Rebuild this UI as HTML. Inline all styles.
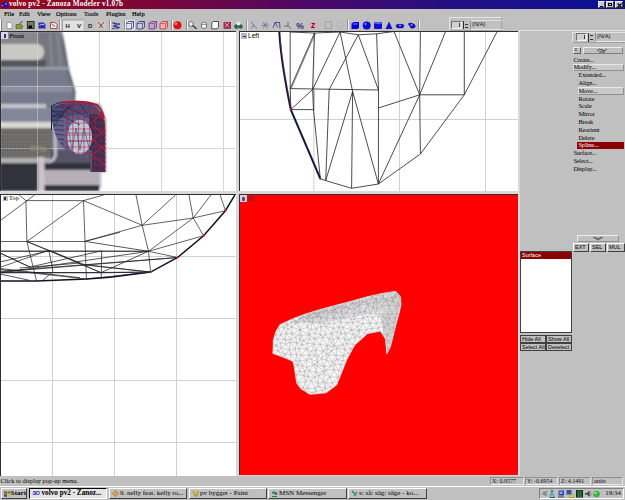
<!DOCTYPE html><html><head><meta charset="utf-8"><style>
*{margin:0;padding:0;box-sizing:border-box}
html,body{width:625px;height:500px;overflow:hidden;background:#c0c0c0;font-family:"Liberation Sans",sans-serif;}
.a{position:absolute}
.t{position:absolute;white-space:nowrap;line-height:1;color:#000}
.btn{position:absolute;background:#c0c0c0;border-top:1px solid #fff;border-left:1px solid #fff;border-right:1px solid #404040;border-bottom:1px solid #404040}
.sunk{position:absolute;border-top:1px solid #808080;border-left:1px solid #808080;border-right:1px solid #fff;border-bottom:1px solid #fff}
</style></head><body>

<div class="a" style="left:0;top:0;width:625px;height:9px;background:linear-gradient(to right,#980818 0%,#7a0638 25%,#4a0868 50%,#221082 72%,#0a1096 100%)"></div>
<svg class="a" style="left:1px;top:1.5px" width="8" height="6"><ellipse cx="4" cy="3" rx="3.8" ry="2.8" fill="#2010a8"/><circle cx="5" cy="2" r="1" fill="#a070e0"/><circle cx="1.5" cy="3.5" r="0.8" fill="#c080d0"/></svg>
<div class="t" style="left:9px;top:1px;font-size:7.2px;font-weight:bold;color:#fff;font-family:'Liberation Serif',serif;letter-spacing:0.2px">volvo pv2 - Zanoza Modeler v1.07b</div>
<div class="a" style="left:598px;top:1px;width:7px;height:7px;background:#c8c8c8;border-top:1px solid #f0f0f0;border-left:1px solid #f0f0f0;border-right:1px solid #404040;border-bottom:1px solid #404040"></div>
<div class="a" style="left:605.5px;top:1px;width:8px;height:7px;background:#c8c8c8;border-top:1px solid #f0f0f0;border-left:1px solid #f0f0f0;border-right:1px solid #404040;border-bottom:1px solid #404040"></div>
<div class="a" style="left:615.3px;top:1px;width:8px;height:7px;background:#c8c8c8;border-top:1px solid #f0f0f0;border-left:1px solid #f0f0f0;border-right:1px solid #404040;border-bottom:1px solid #404040"></div>
<div class="a" style="left:600px;top:5.5px;width:3px;height:1px;background:#000"></div>
<div class="a" style="left:608px;top:3px;width:4px;height:3px;border:1px solid #000;border-top-width:1.5px"></div>
<svg class="a" style="left:617px;top:2.5px" width="5" height="5"><path d="M0.5,0.5 L4.5,4.5 M4.5,0.5 L0.5,4.5" stroke="#000" stroke-width="1.1"/></svg>
<div class="t" style="left:4px;top:11px;font-size:6.5px;font-family:'Liberation Serif',serif;-webkit-text-stroke:0.15px #000">File</div>
<div class="t" style="left:19px;top:11px;font-size:6.5px;font-family:'Liberation Serif',serif;-webkit-text-stroke:0.15px #000">Edit</div>
<div class="t" style="left:37px;top:11px;font-size:6.5px;font-family:'Liberation Serif',serif;-webkit-text-stroke:0.15px #000">View</div>
<div class="t" style="left:56px;top:11px;font-size:6.5px;font-family:'Liberation Serif',serif;-webkit-text-stroke:0.15px #000">Options</div>
<div class="t" style="left:84px;top:11px;font-size:6.5px;font-family:'Liberation Serif',serif;-webkit-text-stroke:0.15px #000">Tools</div>
<div class="t" style="left:106px;top:11px;font-size:6.5px;font-family:'Liberation Serif',serif;-webkit-text-stroke:0.15px #000">Plugins</div>
<div class="t" style="left:132px;top:11px;font-size:6.5px;font-family:'Liberation Serif',serif;-webkit-text-stroke:0.15px #000">Help</div>
<div class="a" style="left:0;top:19px;width:2px;height:12px;background:#fff;border-right:1px solid #808080"></div>
<svg class="a" style="left:0;top:0" width="625" height="32" viewBox="0 0 625 32"><rect x="62.5" y="20" width="21" height="10.5" fill="#e2e2e2"/><path d="M62.5,30.5 L62.5,20 L83.5,20" fill="none" stroke="#808080" stroke-width="0.6"/><rect x="125" y="20" width="10" height="10.5" fill="#e0e0e0"/><path d="M7,22.5 L10.5,22.5 L12,24 L12,28.5 L7,28.5 Z" fill="#fff" stroke="#707070" stroke-width="0.6"/><path d="M16,24.5 L21,24.5 L23,26 L22,28.5 L16,28.5 Z" fill="#8a9a30" stroke="#404010" stroke-width="0.5"/><path d="M19.5,23.5 L22.5,21.5" stroke="#303030" stroke-width="0.9"/><rect x="27.3" y="21.5" width="6.8" height="7" fill="#708060" stroke="#202020" stroke-width="0.9"/><rect x="28.5" y="25.5" width="3.5" height="2.6" fill="#000"/><path d="M38.5,22.5 L43.5,22.5 L45.5,24.5 L45.5,28.5 L38.5,28.5 Z" fill="#2828b0"/><path d="M39.5,25.5 Q42,23 44.5,25" stroke="#fff" stroke-width="0.8" fill="none"/><path d="M50.5,22.5 L55,22.5 L57,24.5 L57,28.5 L50.5,28.5 Z" fill="#f4e8e8" stroke="#802020" stroke-width="0.7"/><path d="M51.5,24 L55,26.5" stroke="#a02020" stroke-width="0.8"/><text x="65.5" y="28" font-size="6" font-weight="bold" font-family="Liberation Sans" fill="#202020">H</text><text x="77" y="28" font-size="6" font-weight="bold" font-family="Liberation Sans" fill="#202020">V</text><text x="88" y="28" font-size="6" font-weight="bold" font-family="Liberation Sans" fill="#202020">D</text><rect x="97" y="21" width="8.5" height="8" fill="#e8c8c8" opacity="0.6"/><path d="M98,22 L103,28 M104,22 L99,28" stroke="#602020" stroke-width="0.8"/><circle cx="101" cy="25" r="1" fill="#30a030"/><path d="M112,23 L120,24 L113,26 L120,27.5 L112,28.5 M114,22 L118,29" stroke="#303090" stroke-width="0.9" fill="none"/><path d="M126,23.5 L128,21.5 L133.5,21.5 L133.5,27 L131.5,29 L126,29 Z" fill="#e8e8f0" stroke="#404080" stroke-width="0.9"/><path d="M126,23.5 L131.5,23.5 L133.5,21.5 M131.5,23.5 L131.5,29" stroke="#404080" stroke-width="0.7" fill="none"/><path d="M137,23.5 L139,21.5 L144.5,21.5 L144.5,27 L142.5,29 L137,29 Z" fill="#c8c8e0" stroke="#404080" stroke-width="0.9"/><path d="M137,23.5 L142.5,23.5 L144.5,21.5 M142.5,23.5 L142.5,29" stroke="#404080" stroke-width="0.7" fill="none"/><path d="M149,23.5 L151,21.5 L156.5,21.5 L156.5,27 L154.5,29 L149,29 Z" fill="#c8a0d0" stroke="#704080" stroke-width="0.9"/><path d="M149,23.5 L154.5,23.5 L156.5,21.5 M154.5,23.5 L154.5,29" stroke="#704080" stroke-width="0.7" fill="none"/><path d="M160,23.5 L162,21.5 L167.5,21.5 L167.5,27 L165.5,29 L160,29 Z" fill="#f0b0b0" stroke="#c04050" stroke-width="0.9"/><path d="M160,23.5 L165.5,23.5 L167.5,21.5 M165.5,23.5 L165.5,29" stroke="#c04050" stroke-width="0.7" fill="none"/><circle cx="177.5" cy="25.3" r="4" fill="#e01010"/><circle cx="176" cy="23.8" r="1.2" fill="#ffa0a0"/><circle cx="191" cy="24" r="2.4" fill="#f0f0f0" stroke="#404040" stroke-width="0.7"/><path d="M192.5,25.5 L196.5,28.8" stroke="#303030" stroke-width="1.3"/><path d="M201.5,23.5 L201.5,27.5 Q204,29.5 206.5,27.5 L206.5,23.5" fill="#fff" stroke="#505050" stroke-width="0.8"/><ellipse cx="204" cy="23.5" rx="2.5" ry="1.2" fill="#e0e0e0" stroke="#505050" stroke-width="0.6"/><path d="M211.8,23 L213.5,21.5 L218.5,21.5 L218.5,27 L217,28.8 L211.8,28.8 Z" fill="#fff" stroke="#404040" stroke-width="0.9"/><rect x="223.5" y="22" width="7.5" height="6.8" fill="#a03050"/><path d="M225,23 L229,27 M229,23 L225,27" stroke="#f0c0d0" stroke-width="0.7"/><circle cx="236.5" cy="26.5" r="2.3" fill="#306050"/><circle cx="240.5" cy="26.5" r="2.3" fill="#306050"/><circle cx="238.5" cy="23.5" r="2" fill="#e0f0f0"/><path d="M251,22 Q256,25 251,28.5 M253,25 L257,28.5" stroke="#6a6aa0" stroke-width="0.9" fill="none"/><path d="M261.5,25.5 L269,25 M263,22 L267.5,28.5 M267,22 L263,28.5" stroke="#6a6aa0" stroke-width="0.8" fill="none"/><path d="M273,28 L275,22.5 L279.5,22.5 L280,28.5 M275,22.5 L277.5,27" stroke="#404090" stroke-width="0.9" fill="none"/><path d="M284,26 L288,26 L291.5,29 M288,26 L288,22" stroke="#505070" stroke-width="0.8" fill="none"/><text x="296.2" y="29" font-size="8.6" font-weight="bold" font-family="Liberation Sans" fill="#303070">%</text><circle cx="313.5" cy="25.2" r="4.3" fill="#e4a8bc"/><text x="311" y="28" font-size="6.5" font-weight="bold" font-family="Liberation Sans" fill="#400020">Z</text><rect x="325" y="22" width="6.5" height="6.5" fill="none" stroke="#a09898" stroke-width="0.8"/><circle cx="340" cy="25.2" r="3.3" fill="none" stroke="#a09898" stroke-width="0.7" stroke-dasharray="1 0.8"/><path d="M351.5,23.5 L353.5,22 L359,22 L359,28 L357,29 L351.5,29 Z" fill="#0000e0"/><rect x="353" y="23.5" width="4.5" height="1" fill="#8080ff"/><circle cx="366.7" cy="25.4" r="4" fill="#0a0ad0"/><circle cx="365.5" cy="24" r="1" fill="#a0a0ff"/><rect x="374" y="22" width="8" height="7" rx="1.2" fill="#1010d0"/><ellipse cx="378" cy="23" rx="4" ry="1" fill="#6060ff"/><path d="M389,21.5 L392.5,29 L385.5,29 Z" fill="#1010d0"/><ellipse cx="400" cy="26" rx="4.2" ry="2.3" fill="#1010c0"/><ellipse cx="400" cy="25.5" rx="1.5" ry="0.7" fill="#a0a0ff"/><path d="M408,24 Q409,22 412,23 Q416,24 415.5,27 Q414,29 411,28.5 Z" fill="#1010c0"/><ellipse cx="411.5" cy="25" rx="1.3" ry="0.8" fill="#a0a0ff"/></svg>
<div class="a" style="left:58.5px;top:20px;width:2px;height:10px;border-left:1px solid #909090;border-right:1px solid #f0f0f0"></div>
<div class="a" style="left:108.5px;top:20px;width:2px;height:10px;border-left:1px solid #909090;border-right:1px solid #f0f0f0"></div>
<div class="a" style="left:123.5px;top:20px;width:2px;height:10px;border-left:1px solid #909090;border-right:1px solid #f0f0f0"></div>
<div class="a" style="left:170.5px;top:20px;width:2px;height:10px;border-left:1px solid #909090;border-right:1px solid #f0f0f0"></div>
<div class="a" style="left:186px;top:20px;width:2px;height:10px;border-left:1px solid #909090;border-right:1px solid #f0f0f0"></div>
<div class="a" style="left:245.5px;top:20px;width:2px;height:10px;border-left:1px solid #909090;border-right:1px solid #f0f0f0"></div>
<div class="a" style="left:347px;top:20px;width:2px;height:10px;border-left:1px solid #909090;border-right:1px solid #f0f0f0"></div>
<div class="a" style="left:417.5px;top:20px;width:2px;height:10px;border-left:1px solid #909090;border-right:1px solid #f0f0f0"></div>
<div class="a" style="left:449px;top:16.5px;width:53px;height:14.5px;border-top:1px solid #e4e4e4;border-left:1px solid #e4e4e4;border-right:1px solid #a0a0a0;border-bottom:1px solid #a0a0a0"></div>
<div class="a" style="left:451px;top:21px;width:11px;height:8px;background:#d0d0d0;border-top:1px solid #707070;border-left:1px solid #707070;border-right:1px solid #f0f0f0;border-bottom:1px solid #f0f0f0"></div>
<div class="a" style="left:459px;top:23px;width:1px;height:4px;background:#404040"></div>
<div class="a" style="left:463px;top:21px;width:1px;height:8px;background:#303030"></div>
<div class="a" style="left:465px;top:23.5px;width:3px;height:1px;background:#303030"></div><div class="a" style="left:465px;top:26.5px;width:3px;height:1px;background:#303030"></div>
<div class="a" style="left:470px;top:20px;width:32px;height:10px;border-left:1px solid #909090;border-top:1px solid #e0e0e0;border-bottom:1px solid #e8e8e8"></div>
<div class="t" style="left:472px;top:22.2px;font-size:5.8px;color:#101010">(N/A)</div>
<div class="a" style="left:519px;top:30px;width:106px;height:1px;background:#e0e0e0"></div>
<div class="a" style="left:0;top:31px;width:520px;height:445px;background:#d8d8d8"></div>
<div class="a" style="left:0px;top:31px;width:236px;height:160px;background:#ffffff;border-top:1px solid #303030;border-left:1px solid #303030;overflow:hidden">
<svg class="a" style="left:-1px;top:-1px" width="236" height="160" viewBox="0 31 236 160">
<defs><filter id="bl" x="-10%" y="-10%" width="120%" height="120%"><feGaussianBlur stdDeviation="1.0"/></filter></defs>
<line x1="37.5" y1="31" x2="37.5" y2="191" stroke="#cccccc" stroke-width="1"/>
<line x1="99.5" y1="31" x2="99.5" y2="191" stroke="#cccccc" stroke-width="1"/>
<line x1="161.5" y1="31" x2="161.5" y2="191" stroke="#cccccc" stroke-width="1"/>
<line x1="223.5" y1="31" x2="223.5" y2="191" stroke="#cccccc" stroke-width="1"/>
<line x1="0" y1="86.5" x2="237" y2="86.5" stroke="#cccccc" stroke-width="1"/>
<line x1="0" y1="148.5" x2="237" y2="148.5" stroke="#cccccc" stroke-width="1"/>
<g filter="url(#bl)">
<path d="M0,31 L61,31 L64,46 L68,70 L72,83 L74.5,92 L74,101 L100,104 L106,120 L106,172 L101,172 L101,186 L98,191 L0,191 Z" fill="#767a8a"/><path d="M61,31 L64,46 L68,70 L72,83 L74.5,92 L74,101" fill="none" stroke="#555864" stroke-width="2"/><rect x="0" y="31" width="62" height="13" fill="#88888e"/><path d="M38,32 L60,32 L65,68 L40,68 Z" fill="#74767e"/><path d="M50,34 L52,66 M57,34 L61,66" stroke="#a0a0a6" stroke-width="1"/><path d="M0,44 L38,44 Q45,46 44,53 Q43,59 38,60 L0,60 Z" fill="#c8c8c4"/><rect x="0" y="60" width="46" height="7" fill="#55555c"/><rect x="0" y="67" width="70" height="2.5" fill="#9ea0ac"/><rect x="0" y="86" width="72" height="6" fill="#8e8ea0"/><rect x="0" y="92" width="73" height="12" fill="#767a8c"/><rect x="0" y="104" width="46" height="4" fill="#c4c4ce"/><rect x="0" y="108" width="53" height="14" fill="#84869a"/><rect x="0" y="122" width="54" height="6" fill="#d8d8d0"/><rect x="0" y="128" width="52" height="30" fill="#6a6a6a"/><rect x="50" y="150" width="52" height="22" fill="#545466"/><path d="M52,126 L55,130 L55.5,155 Q54,162 47,162" fill="none" stroke="#c4bcc8" stroke-width="3"/><rect x="0" y="158" width="50" height="5" fill="#b0b0b2"/><rect x="0" y="163" width="99" height="28" fill="#30303e"/><rect x="44" y="170" width="57" height="15" fill="#b6aeb8"/><rect x="38" y="157" width="6.5" height="34" fill="#ccc4cc"/>
</g>
<line x1="37.5" y1="31" x2="37.5" y2="191" stroke="#e0e0e0" stroke-width="1" opacity="0.45"/>
<line x1="99.5" y1="31" x2="99.5" y2="191" stroke="#e0e0e0" stroke-width="1" opacity="0.45"/>
<line x1="161.5" y1="31" x2="161.5" y2="191" stroke="#e0e0e0" stroke-width="1" opacity="0.45"/>
<line x1="223.5" y1="31" x2="223.5" y2="191" stroke="#e0e0e0" stroke-width="1" opacity="0.45"/>
<line x1="0" y1="86.5" x2="237" y2="86.5" stroke="#e0e0e0" stroke-width="1" opacity="0.45"/>
<line x1="0" y1="148.5" x2="237" y2="148.5" stroke="#e0e0e0" stroke-width="1" opacity="0.45"/>
<line x1="0" y1="131" x2="51" y2="131" stroke="#8a8474" stroke-width="0.6" opacity="0.8"/><line x1="0" y1="134.5" x2="51" y2="134.5" stroke="#8a8474" stroke-width="0.6" opacity="0.8"/><line x1="0" y1="138" x2="51" y2="138" stroke="#8a8474" stroke-width="0.6" opacity="0.8"/><line x1="0" y1="141.5" x2="51" y2="141.5" stroke="#8a8474" stroke-width="0.6" opacity="0.8"/><line x1="0" y1="145" x2="51" y2="145" stroke="#8a8474" stroke-width="0.6" opacity="0.8"/><line x1="0" y1="152" x2="51" y2="152" stroke="#8a8474" stroke-width="0.6" opacity="0.8"/><line x1="0" y1="155" x2="51" y2="155" stroke="#8a8474" stroke-width="0.6" opacity="0.8"/>
<line x1="3" y1="129" x2="3" y2="157" stroke="#5a5a5a" stroke-width="0.4" opacity="0.6"/><line x1="7" y1="129" x2="7" y2="157" stroke="#5a5a5a" stroke-width="0.4" opacity="0.6"/><line x1="11" y1="129" x2="11" y2="157" stroke="#5a5a5a" stroke-width="0.4" opacity="0.6"/><line x1="15" y1="129" x2="15" y2="157" stroke="#5a5a5a" stroke-width="0.4" opacity="0.6"/><line x1="19" y1="129" x2="19" y2="157" stroke="#5a5a5a" stroke-width="0.4" opacity="0.6"/><line x1="23" y1="129" x2="23" y2="157" stroke="#5a5a5a" stroke-width="0.4" opacity="0.6"/><line x1="27" y1="129" x2="27" y2="157" stroke="#5a5a5a" stroke-width="0.4" opacity="0.6"/><line x1="31" y1="129" x2="31" y2="157" stroke="#5a5a5a" stroke-width="0.4" opacity="0.6"/><line x1="35" y1="129" x2="35" y2="157" stroke="#5a5a5a" stroke-width="0.4" opacity="0.6"/><line x1="39" y1="129" x2="39" y2="157" stroke="#5a5a5a" stroke-width="0.4" opacity="0.6"/><line x1="43" y1="129" x2="43" y2="157" stroke="#5a5a5a" stroke-width="0.4" opacity="0.6"/><line x1="47" y1="129" x2="47" y2="157" stroke="#5a5a5a" stroke-width="0.4" opacity="0.6"/><line x1="51" y1="129" x2="51" y2="157" stroke="#5a5a5a" stroke-width="0.4" opacity="0.6"/>
<path d="M30,146 Q38,144 48,148 L46,152 Q36,150 30,151 Z" fill="#9a8a78" opacity="0.6"/>
<defs><clipPath id="hl"><path d="M51,108 Q60,102 85,102 Q97,104 103,117 L105,125 L105,172 L90.5,172 L90.5,159 Q75,157 67,151 Q52,140 51,108 Z"/></clipPath></defs>
<path d="M51,108 Q60,102 85,102 Q97,104 103,117 L105,125 L105,172 L90.5,172 L90.5,159 Q75,157 67,151 Q52,140 51,108 Z" fill="#64648a"/>
<g clip-path="url(#hl)">
<rect x="89" y="100" width="17" height="75" fill="#3c3050"/>
<path d="M50,100 L106,100 L106,116 Q80,110 50,122 Z" fill="#4a4c74"/>
<rect x="50" y="150" width="42" height="25" fill="#5a5a70"/>
<ellipse cx="79.5" cy="137" rx="12.5" ry="17" fill="#c4c4d2"/>
<path d="M68,127 L72,150 L76,128 L80,150 L84,128 L89,148 M67,133 L91,133 M68,141 L91,141" stroke="#50507a" stroke-width="0.7" fill="none"/>
<path d="M51,110 L80,125 M51,118 L75,104 M60,104 L90,118 M70,104 L51,130 M51,124 L67,110 M80,104 L95,125" stroke="#202048" stroke-width="0.7" fill="none"/>
<line x1="50" y1="106.3" x2="64" y2="107.3" stroke="#202050" stroke-width="0.6"/><line x1="50" y1="110.9" x2="64" y2="111.9" stroke="#202050" stroke-width="0.6"/><line x1="50" y1="115.5" x2="64" y2="116.5" stroke="#202050" stroke-width="0.6"/><line x1="50" y1="120.1" x2="64" y2="121.1" stroke="#202050" stroke-width="0.6"/><line x1="50" y1="124.7" x2="64" y2="125.7" stroke="#202050" stroke-width="0.6"/><line x1="50" y1="129.3" x2="64" y2="130.3" stroke="#202050" stroke-width="0.6"/><line x1="50" y1="133.9" x2="64" y2="134.9" stroke="#202050" stroke-width="0.6"/><line x1="50" y1="138.5" x2="64" y2="139.5" stroke="#202050" stroke-width="0.6"/><line x1="50" y1="143.1" x2="64" y2="144.1" stroke="#202050" stroke-width="0.6"/><line x1="50" y1="147.7" x2="64" y2="148.7" stroke="#202050" stroke-width="0.6"/><line x1="50" y1="152.3" x2="64" y2="153.3" stroke="#202050" stroke-width="0.6"/><line x1="50" y1="156.9" x2="64" y2="157.9" stroke="#202050" stroke-width="0.6"/><line x1="50" y1="161.5" x2="64" y2="162.5" stroke="#202050" stroke-width="0.6"/><line x1="50" y1="166.1" x2="64" y2="167.1" stroke="#202050" stroke-width="0.6"/><line x1="62" y1="105" x2="106" y2="105" stroke="#a02848" stroke-width="0.55"/><line x1="62" y1="111" x2="106" y2="111" stroke="#a02848" stroke-width="0.55"/><line x1="62" y1="117" x2="106" y2="117" stroke="#a02848" stroke-width="0.55"/><line x1="62" y1="123" x2="106" y2="123" stroke="#a02848" stroke-width="0.55"/><line x1="62" y1="129" x2="106" y2="129" stroke="#a02848" stroke-width="0.55"/><line x1="62" y1="135" x2="106" y2="135" stroke="#a02848" stroke-width="0.55"/><line x1="62" y1="141" x2="106" y2="141" stroke="#a02848" stroke-width="0.55"/><line x1="62" y1="147" x2="106" y2="147" stroke="#a02848" stroke-width="0.55"/><line x1="62" y1="153" x2="106" y2="153" stroke="#a02848" stroke-width="0.55"/><line x1="62" y1="159" x2="106" y2="159" stroke="#a02848" stroke-width="0.55"/><line x1="62" y1="165" x2="106" y2="165" stroke="#a02848" stroke-width="0.55"/><line x1="62" y1="171" x2="106" y2="171" stroke="#a02848" stroke-width="0.55"/><line x1="67.2" y1="100" x2="67.2" y2="175" stroke="#902050" stroke-width="0.6"/><line x1="72.8" y1="100" x2="72.8" y2="175" stroke="#902050" stroke-width="0.6"/><line x1="78.4" y1="100" x2="78.4" y2="175" stroke="#902050" stroke-width="0.6"/><line x1="84.0" y1="100" x2="84.0" y2="175" stroke="#902050" stroke-width="0.6"/><line x1="89.6" y1="100" x2="89.6" y2="175" stroke="#902050" stroke-width="0.6"/><line x1="95.2" y1="100" x2="95.2" y2="175" stroke="#902050" stroke-width="0.6"/><line x1="100.8" y1="100" x2="100.8" y2="175" stroke="#902050" stroke-width="0.6"/><line x1="106.4" y1="100" x2="106.4" y2="175" stroke="#902050" stroke-width="0.6"/>
<path d="M93,110 L104,120 M92,125 L105,135 M92,140 L105,150 M92,155 L105,165 M105,112 L92,122 M105,130 L92,140 M105,145 L92,155" stroke="#d81838" stroke-width="0.9" fill="none"/>
</g>
<path d="M51.5,130 L51.5,106 Q58,102 64,102" fill="none" stroke="#202048" stroke-width="1"/>
<path d="M62,102.5 Q85,100 97,105 Q103,110 104,118" fill="none" stroke="#b01030" stroke-width="1.6"/>
<path d="M60,103 Q85,99 99,107 Q105,118 105,135 L105,172" fill="none" stroke="#c81030" stroke-width="1.2" stroke-dasharray="2.5 2"/>
</svg>
<div class="a" style="left:0px;top:0px;width:7px;height:7px;background:#d8d8ec"></div><div class="a" style="left:2.5px;top:2px;width:2.5px;height:3.5px;background:#303060"></div>
<div class="t" style="left:8.3px;top:0.5px;font-size:6.8px;color:#101020;font-family:'Liberation Serif',serif;-webkit-text-stroke:0.15px #101020">Front</div>
</div>
<div class="a" style="left:239px;top:31px;width:279px;height:160px;background:#ffffff;border-top:1px solid #303030;border-left:1px solid #303030;overflow:hidden">
<svg class="a" style="left:-1px;top:-1px" width="279" height="160" viewBox="239 31 279 160">
<line x1="313.8" y1="31" x2="313.8" y2="191" stroke="#d0d0d0" stroke-width="1"/>
<line x1="399.5" y1="31" x2="399.5" y2="191" stroke="#d0d0d0" stroke-width="1"/>
<line x1="485.5" y1="31" x2="485.5" y2="191" stroke="#d0d0d0" stroke-width="1"/>
<line x1="238" y1="119.5" x2="519" y2="119.5" stroke="#d0d0d0" stroke-width="1"/>
<line x1="290.2" y1="32" x2="290.2" y2="88.6" stroke="#202020" stroke-width="0.8"/>
<line x1="290.2" y1="88.6" x2="290.8" y2="109.6" stroke="#202020" stroke-width="0.8"/>
<line x1="314.5" y1="33" x2="290.2" y2="88.6" stroke="#202020" stroke-width="0.8"/>
<line x1="314.5" y1="33" x2="312.6" y2="89.5" stroke="#202020" stroke-width="0.8"/>
<line x1="312.6" y1="89.5" x2="313.5" y2="109.6" stroke="#202020" stroke-width="0.8"/>
<line x1="340.1" y1="32" x2="312.6" y2="89.5" stroke="#202020" stroke-width="0.8"/>
<line x1="340.1" y1="32" x2="352.6" y2="91.4" stroke="#202020" stroke-width="0.8"/>
<line x1="358.3" y1="34.8" x2="378.5" y2="90" stroke="#202020" stroke-width="0.8"/>
<line x1="376.6" y1="33.8" x2="378.5" y2="90" stroke="#202020" stroke-width="0.8"/>
<line x1="290.2" y1="88.6" x2="378.5" y2="90" stroke="#202020" stroke-width="0.8"/>
<line x1="312.6" y1="89.5" x2="290.8" y2="109.6" stroke="#202020" stroke-width="0.8"/>
<line x1="290.8" y1="109.6" x2="313.5" y2="109.6" stroke="#202020" stroke-width="0.8"/>
<line x1="313.5" y1="109.6" x2="320.3" y2="178.7" stroke="#202020" stroke-width="0.8"/>
<line x1="358.3" y1="34.8" x2="329.2" y2="89.5" stroke="#202020" stroke-width="0.8"/>
<line x1="329.2" y1="89.5" x2="325.7" y2="180.6" stroke="#202020" stroke-width="0.8"/>
<line x1="352.6" y1="91.4" x2="325.7" y2="180.6" stroke="#202020" stroke-width="0.8"/>
<line x1="352.6" y1="91.4" x2="351.6" y2="188.3" stroke="#202020" stroke-width="0.8"/>
<line x1="352.6" y1="91.4" x2="378.4" y2="184" stroke="#202020" stroke-width="0.8"/>
<line x1="325.7" y1="180.6" x2="351.6" y2="188.3" stroke="#202020" stroke-width="0.8"/>
<line x1="351.6" y1="188.3" x2="378.4" y2="184" stroke="#202020" stroke-width="0.8"/>
<line x1="320.3" y1="178.7" x2="325.7" y2="180.6" stroke="#202020" stroke-width="0.8"/>
<line x1="378.5" y1="90" x2="378.4" y2="184" stroke="#202020" stroke-width="0.8"/>
<line x1="394" y1="31.5" x2="419.7" y2="94.8" stroke="#202020" stroke-width="0.8"/>
<line x1="420.4" y1="31.5" x2="419.7" y2="94.8" stroke="#202020" stroke-width="0.8"/>
<line x1="445.6" y1="31.5" x2="419.7" y2="94.8" stroke="#202020" stroke-width="0.8"/>
<line x1="464.3" y1="31.5" x2="464.3" y2="94.8" stroke="#202020" stroke-width="0.8"/>
<line x1="497.2" y1="31.5" x2="464.3" y2="94.8" stroke="#202020" stroke-width="0.8"/>
<line x1="464.3" y1="94.8" x2="420.4" y2="154" stroke="#202020" stroke-width="0.8"/>
<line x1="420.4" y1="154" x2="378.4" y2="184" stroke="#202020" stroke-width="0.8"/>
<line x1="419.7" y1="94.8" x2="464.3" y2="94.8" stroke="#202020" stroke-width="0.8"/>
<line x1="419.7" y1="94.8" x2="378.4" y2="184" stroke="#202020" stroke-width="0.8"/>
<line x1="419.7" y1="94.8" x2="420.4" y2="154" stroke="#202020" stroke-width="0.8"/>
<line x1="290.2" y1="32" x2="314.5" y2="33" stroke="#202020" stroke-width="0.8"/>
<line x1="314.5" y1="33" x2="340.1" y2="32" stroke="#202020" stroke-width="0.8"/>
<line x1="340.1" y1="32" x2="358.3" y2="34.8" stroke="#202020" stroke-width="0.8"/>
<line x1="358.3" y1="34.8" x2="376.6" y2="33.8" stroke="#202020" stroke-width="0.8"/>
<line x1="376.6" y1="33.8" x2="394" y2="31.5" stroke="#202020" stroke-width="0.8"/>
<line x1="378.4" y1="108" x2="419.7" y2="94.8" stroke="#202020" stroke-width="0.8"/>
<line x1="315.5" y1="33" x2="291.2" y2="88.6" stroke="#404040" stroke-width="0.6"/>
<line x1="314" y1="90" x2="313.8" y2="110" stroke="#303030" stroke-width="0.6"/>
<path d="M279.3,32 Q281,62 290.8,109.6 L320.3,178.7" fill="none" stroke="#181838" stroke-width="2"/><path d="M280.3,40 Q282.5,66 291.5,109" fill="none" stroke="#803040" stroke-width="0.5"/>
<circle cx="290.8" cy="109.6" r="1" fill="#d02020"/><circle cx="320.3" cy="178.7" r="1" fill="#d02020"/>
</svg>
<div class="a" style="left:1.2px;top:1px;width:5.5px;height:5.5px;background:#b8b8c8"></div><div class="a" style="left:2.5px;top:3.5px;width:3.5px;height:1px;background:#303040"></div>
<div class="t" style="left:8px;top:0.6px;font-size:6.6px;color:#000">Left</div>
</div>
<div class="a" style="left:0px;top:194px;width:236px;height:282px;background:#ffffff;border-top:1px solid #303030;border-left:1px solid #303030;overflow:hidden">
<svg class="a" style="left:-1px;top:-1px" width="236" height="282" viewBox="0 194 236 282">
<line x1="52.5" y1="194" x2="52.5" y2="476" stroke="#d0d0d0" stroke-width="1"/>
<line x1="114.5" y1="194" x2="114.5" y2="476" stroke="#d0d0d0" stroke-width="1"/>
<line x1="176.5" y1="194" x2="176.5" y2="476" stroke="#d0d0d0" stroke-width="1"/>
<line x1="0" y1="256.5" x2="237" y2="256.5" stroke="#d0d0d0" stroke-width="1"/>
<line x1="0" y1="318.5" x2="237" y2="318.5" stroke="#d0d0d0" stroke-width="1"/>
<line x1="0" y1="380.5" x2="237" y2="380.5" stroke="#d0d0d0" stroke-width="1"/>
<line x1="0" y1="442.5" x2="237" y2="442.5" stroke="#d0d0d0" stroke-width="1"/>
<line x1="0" y1="220.8" x2="34.6" y2="195" stroke="#202020" stroke-width="0.7"/>
<line x1="25.9" y1="200.6" x2="26.9" y2="241.5" stroke="#202020" stroke-width="0.7"/>
<line x1="25.9" y1="200.6" x2="83.5" y2="200.6" stroke="#202020" stroke-width="0.7"/>
<line x1="83.5" y1="200.6" x2="86.4" y2="279" stroke="#202020" stroke-width="0.7"/>
<line x1="83.5" y1="200.6" x2="103.7" y2="195" stroke="#202020" stroke-width="0.7"/>
<line x1="83.5" y1="200.6" x2="26.9" y2="241.5" stroke="#202020" stroke-width="0.7"/>
<line x1="26.9" y1="241.5" x2="84.5" y2="241.5" stroke="#202020" stroke-width="0.7"/>
<line x1="26.9" y1="241.5" x2="84.5" y2="264.6" stroke="#202020" stroke-width="0.7"/>
<line x1="84.5" y1="264.6" x2="150.6" y2="272.1" stroke="#202020" stroke-width="0.7"/>
<line x1="26.9" y1="241.5" x2="36.5" y2="280.9" stroke="#202020" stroke-width="0.7"/>
<line x1="49" y1="250.2" x2="99.8" y2="272.2" stroke="#202020" stroke-width="0.7"/>
<line x1="0" y1="253" x2="30.7" y2="267.4" stroke="#202020" stroke-width="0.7"/>
<line x1="0" y1="267.4" x2="49" y2="250.2" stroke="#202020" stroke-width="0.7"/>
<line x1="0" y1="269.4" x2="86.4" y2="279" stroke="#202020" stroke-width="0.7"/>
<line x1="86.4" y1="279" x2="150.6" y2="272.1" stroke="#202020" stroke-width="0.7"/>
<line x1="84.5" y1="241.5" x2="142.2" y2="225.3" stroke="#202020" stroke-width="0.7"/>
<line x1="142.2" y1="225.3" x2="148.5" y2="251.3" stroke="#202020" stroke-width="0.7"/>
<line x1="136" y1="195" x2="142.2" y2="225.3" stroke="#202020" stroke-width="0.7"/>
<line x1="142.2" y1="225.3" x2="193.2" y2="218" stroke="#202020" stroke-width="0.7"/>
<line x1="193.2" y1="218" x2="225.4" y2="210.7" stroke="#202020" stroke-width="0.7"/>
<line x1="175.5" y1="195" x2="142.2" y2="225.3" stroke="#202020" stroke-width="0.7"/>
<line x1="189" y1="195" x2="193.2" y2="218" stroke="#202020" stroke-width="0.7"/>
<line x1="193.2" y1="218" x2="203.6" y2="235.7" stroke="#202020" stroke-width="0.7"/>
<line x1="211" y1="195" x2="193.2" y2="218" stroke="#202020" stroke-width="0.7"/>
<line x1="193.2" y1="218" x2="148.5" y2="251.3" stroke="#202020" stroke-width="0.7"/>
<line x1="148.5" y1="251.3" x2="177.6" y2="257.5" stroke="#202020" stroke-width="0.7"/>
<line x1="148.5" y1="251.3" x2="203.6" y2="235.7" stroke="#202020" stroke-width="0.7"/>
<line x1="148.5" y1="251.3" x2="150.6" y2="272.1" stroke="#202020" stroke-width="0.7"/>
<line x1="220.2" y1="195" x2="225.4" y2="210.7" stroke="#202020" stroke-width="0.7"/>
<line x1="0" y1="241.5" x2="26.9" y2="241.5" stroke="#202020" stroke-width="0.7"/>
<line x1="0" y1="251.1" x2="100.8" y2="251.1" stroke="#202020" stroke-width="0.7"/>
<line x1="100.8" y1="251.1" x2="148.5" y2="251.3" stroke="#202020" stroke-width="0.7"/>
<line x1="0" y1="271.3" x2="177.6" y2="257.5" stroke="#202020" stroke-width="0.7"/>
<line x1="83.5" y1="200.6" x2="142.2" y2="225.3" stroke="#202020" stroke-width="0.7"/>
<line x1="84.5" y1="241.5" x2="120" y2="232.3" stroke="#202020" stroke-width="0.7"/>
<line x1="19.2" y1="195" x2="25.9" y2="200.6" stroke="#202020" stroke-width="0.7"/>
<path d="M0,281 L36.5,280.9 L86.4,279 L110,277.3 L150.6,272.1 L177.6,257.5 L203.6,235.7 L225.4,210.7 L234.8,195.1" fill="none" stroke="#101028" stroke-width="1.5"/>
<path d="M0,272.6 L100,272.6 L150.6,272.1" fill="none" stroke="#303038" stroke-width="1.1"/>
<line x1="0" y1="251.3" x2="148.5" y2="251.3" stroke="#202020" stroke-width="0.75"/>
<line x1="84.5" y1="241.3" x2="148.5" y2="251.3" stroke="#202020" stroke-width="0.75"/>
<line x1="101.7" y1="250.8" x2="101.2" y2="279" stroke="#202020" stroke-width="0.75"/>
<line x1="26.9" y1="241.5" x2="101" y2="272.6" stroke="#202020" stroke-width="0.75"/>
<line x1="0" y1="273" x2="148.5" y2="251.3" stroke="#202020" stroke-width="0.75"/>
<line x1="0" y1="272" x2="177.6" y2="257.5" stroke="#202020" stroke-width="0.75"/>
<line x1="101" y1="272.6" x2="148.5" y2="251.3" stroke="#202020" stroke-width="0.75"/>
<line x1="49" y1="250.8" x2="53" y2="271.5" stroke="#202020" stroke-width="0.75"/>
<line x1="53" y1="271.5" x2="42" y2="281" stroke="#202020" stroke-width="0.75"/>
<line x1="0" y1="274" x2="29.5" y2="280.3" stroke="#202020" stroke-width="0.75"/>
<line x1="0" y1="268.5" x2="80" y2="277.7" stroke="#202020" stroke-width="0.75"/>
<line x1="0" y1="253" x2="30.7" y2="267.4" stroke="#202020" stroke-width="0.75"/>
<line x1="85.6" y1="265" x2="150.6" y2="272.1" stroke="#202020" stroke-width="0.75"/>
<line x1="20" y1="268" x2="80" y2="263" stroke="#202020" stroke-width="0.75"/>
<line x1="0" y1="262" x2="49" y2="250.8" stroke="#202020" stroke-width="0.75"/>
<line x1="30" y1="267" x2="101" y2="251" stroke="#202020" stroke-width="0.75"/>
<circle cx="150.6" cy="272.1" r="1.1" fill="#d02020"/>
<circle cx="177.6" cy="257.5" r="1.1" fill="#d02020"/>
<circle cx="203.6" cy="235.7" r="1.1" fill="#d02020"/>
<circle cx="225.4" cy="210.7" r="1.1" fill="#d02020"/>
</svg>
<div class="a" style="left:2px;top:0.5px;width:5px;height:5px;background:#b8b8d8"></div><div class="a" style="left:3px;top:1.5px;width:2px;height:3px;background:#303050"></div>
<div class="t" style="left:7.7px;top:0.4px;font-size:6.8px;color:#101010;font-family:'Liberation Serif',serif">Top</div>
</div>
<div class="a" style="left:239px;top:194px;width:279px;height:281px;background:#ff0000;border-top:1px solid #303030;border-left:1px solid #303030;overflow:hidden">
<svg class="a" style="left:-1px;top:-1px" width="279" height="281" viewBox="239 194 279 281">
<defs><clipPath id="fen"><path d="M272.8,353.5 L273.2,340 L276,331 L280,324.4 L292,319 L303.5,314.6 L318,310 L334.2,305.6 L350,301.5 L367.5,296.6 L384,293 L395.7,291.2 L400.3,296.6 L401.2,304 L399.5,312 L395.7,326 L390.6,346.6 L386.7,354.2 L385.4,338.9 L380.3,331.2 L367.5,333.8 L354.7,345.3 L347,359.4 L342,372 L336.8,385 L326,393 L310,394.5 L301,389 L296.5,383 L295.3,375 L294,366 L292.6,361.3 L285,358 Z"/></clipPath></defs>
<path d="M272.8,353.5 L273.2,340 L276,331 L280,324.4 L292,319 L303.5,314.6 L318,310 L334.2,305.6 L350,301.5 L367.5,296.6 L384,293 L395.7,291.2 L400.3,296.6 L401.2,304 L399.5,312 L395.7,326 L390.6,346.6 L386.7,354.2 L385.4,338.9 L380.3,331.2 L367.5,333.8 L354.7,345.3 L347,359.4 L342,372 L336.8,385 L326,393 L310,394.5 L301,389 L296.5,383 L295.3,375 L294,366 L292.6,361.3 L285,358 Z" fill="#f6f6f6"/>
<g clip-path="url(#fen)">
<path d="M300,316 L334.2,305.6 L367.5,296.6 L395.7,291.2 L402,298 L392,308 L368,314 L340,320 L315,324 L300,322 Z" fill="#dedee2"/>
<path d="M383,298 L402,294 L401,312 L396,332 L391,350 L386,356 L384,336 L381,318 Z" fill="#d6d6d6"/>
<path d="M273.4,359.8L267.7,367.0M391.3,297.2L395.0,295.2M357.3,390.8L362.7,391.4M369.3,303.3L368.4,305.4M398.8,305.4L404.8,311.9M312.9,287.9L317.1,286.5M349.3,292.5L351.9,292.8M296.3,354.5L301.1,355.2M397.6,396.0L403.4,397.9M406.6,307.0L407.0,312.3M351.9,292.8L357.1,290.9M351.3,369.6L345.1,375.4M299.7,318.7L298.4,322.9M390.4,377.0L387.9,381.3M332.3,362.1L336.9,359.4M334.3,323.1L333.4,328.5M276.9,308.8L282.0,307.9M330.0,376.9L332.3,383.0M376.7,366.8L379.0,364.6M340.5,321.9L339.1,327.0M282.0,307.9L287.1,306.9M269.6,376.9L273.0,375.7M378.1,328.1L383.0,334.3M333.3,339.4L331.4,343.3M316.2,315.5L316.1,316.8M334.4,312.3L333.6,310.4M296.2,322.0L298.4,322.9M325.5,393.6L328.6,399.2M273.0,375.7L281.5,376.5M387.2,390.4L382.9,395.4M277.2,286.3L276.5,290.9M305.4,381.6L311.1,380.5M270.5,340.6L276.5,345.6M396.5,291.7L396.6,293.9M363.3,317.9L367.1,316.6M281.4,286.0L278.1,291.8M311.1,380.5L318.2,383.4M314.0,344.0L311.5,351.6M377.2,308.4L376.5,302.8M402.0,325.1L410.5,321.6M322.9,309.0L326.3,309.9M353.8,387.1L359.5,385.9M357.4,295.4L355.0,303.4M308.9,312.6L310.7,315.2M350.8,348.8L353.0,356.1M298.9,334.9L301.3,335.3M295.8,321.2L292.7,319.3M306.5,359.9L302.5,365.6M292.4,316.4L295.8,321.2M359.1,295.7L359.4,301.5M387.2,390.4L395.8,391.3M356.8,347.9L356.6,353.2M392.1,356.0L387.8,359.3M301.3,335.3L309.1,334.8M285.5,364.4L287.6,370.0M377.0,345.8L385.4,344.0M300.4,330.0L298.4,322.9M281.4,286.0L292.2,285.2M397.1,354.3L393.4,361.2M338.2,338.1L345.1,339.2M333.6,310.4L332.6,310.1M289.2,367.3L287.6,370.0M393.5,297.8L392.6,298.1M378.8,342.5L385.4,344.0M391.2,371.1L385.8,376.1M318.2,316.0L316.1,316.8M333.8,317.9L328.7,324.0M376.7,323.5L371.6,328.3M325.5,370.3L330.0,376.9M317.9,308.6L322.9,309.0M371.0,376.5L373.2,382.4M273.6,354.5L281.9,356.5M282.0,383.1L280.8,385.3M312.3,322.0L316.4,329.1M265.5,337.4L265.4,349.5M268.9,331.8L265.5,337.4M360.4,312.4L364.7,311.3M409.0,344.8L408.8,355.0M303.2,340.7L307.8,343.3M395.1,317.8L401.2,316.1M362.7,391.4L356.6,396.4M376.4,300.1L375.4,299.0M326.3,309.9L327.4,311.1M317.1,286.5L314.9,290.0M394.1,331.8L394.5,338.9M346.6,343.4L344.7,349.5M401.2,316.1L406.2,317.5M371.9,340.6L365.1,343.1M328.3,312.5L323.1,313.3M295.8,321.2L297.7,321.3M398.1,334.7L402.5,338.0M286.1,344.1L289.8,350.1M309.3,338.9L307.8,343.3M353.6,344.6L350.8,348.8M291.9,327.2L300.4,330.0M298.8,292.3L292.7,298.4M359.3,305.3L362.5,301.4M289.9,342.5L295.2,348.5M317.9,308.6L315.9,312.6M395.6,296.9L392.9,301.9M388.6,348.1L392.1,356.0M337.0,332.0L340.9,333.6M331.8,297.5L336.5,301.4M287.1,306.9L285.5,311.2M320.8,317.9L316.1,316.8M284.4,361.4L285.5,364.4M371.9,340.6L379.1,337.2M336.9,295.5L342.0,302.3M373.4,302.9L373.3,307.5M269.4,313.1L271.5,315.9M367.8,355.4L371.0,359.1M295.3,308.9L289.0,312.4M324.2,366.7L323.5,371.4M355.3,303.8L354.4,304.1M265.4,349.5L270.3,349.0M378.7,302.3L377.2,308.4M320.5,284.1L327.7,284.2M331.3,365.9L325.5,370.3M360.7,371.0L364.0,377.3M270.3,349.0L278.3,351.0M309.3,355.1L315.1,355.2M275.8,314.3L271.5,315.9M299.7,318.7L301.4,318.4M365.6,291.9L367.8,293.3M372.6,317.8L370.2,323.2M365.9,370.1L371.0,376.5M404.1,377.4L400.7,380.1M315.1,355.2L317.8,355.9M342.7,360.8L351.2,358.9M312.8,317.8L312.3,322.0M298.4,322.9L297.7,321.3M407.5,377.9L406.1,380.5M297.3,387.5L296.0,390.0M351.2,358.9L353.7,360.0M316.2,315.5L318.2,316.0M352.3,322.8L351.5,330.4M345.1,375.4L350.2,379.7M302.8,316.8L301.4,318.4M303.5,387.7L298.5,391.2M332.4,392.0L335.7,397.4M391.9,365.4L399.6,365.8M289.0,287.2L289.4,290.6M326.6,310.8L322.9,311.6M317.9,308.6L313.6,313.0M284.9,339.3L289.9,342.5M385.8,376.1L390.4,377.0M345.1,339.2L342.9,344.8M340.7,393.9L341.7,395.5M283.8,375.0L289.7,374.6M328.8,291.9L328.0,295.8M327.0,346.1L327.3,349.1M270.6,291.2L270.2,295.2M292.2,285.2L289.4,290.6M323.4,381.8L325.9,382.7M334.3,291.0L331.8,297.5M276.5,290.9L279.0,297.9M364.4,385.0L367.9,386.5M405.3,355.6L407.4,360.1M402.2,393.5L406.9,390.5M264.7,305.9L269.4,313.1M355.6,286.6L361.0,285.1M298.1,365.0L299.5,371.7M320.8,317.9L319.6,312.9M273.4,307.8L275.8,314.3M316.2,372.7L314.8,377.4M396.5,291.7L402.6,291.1M302.5,365.6L304.6,371.5M291.1,322.4L292.7,319.3M314.1,313.5L312.8,317.8M343.6,317.3L347.3,322.8M402.6,291.1L410.8,291.2M289.3,302.1L297.8,303.5M401.8,369.2L399.7,376.2M351.5,319.4L352.3,322.8M387.5,324.3L384.0,326.5M297.8,303.5L303.4,302.7M326.6,305.9L333.0,306.3M382.6,376.3L384.9,379.5M292.3,383.3L291.1,386.3M395.6,296.9L393.5,297.8M280.9,335.1L277.4,339.0M333.0,306.3L337.5,306.9M275.0,384.9L277.5,393.6M374.1,394.0L373.8,398.9M395.6,296.9L400.0,297.2M326.7,318.7L333.8,317.9M328.7,324.0L333.4,328.5M286.2,333.3L284.9,339.3M314.9,339.0L320.4,344.4M375.8,313.4L379.5,314.1M280.8,385.3L281.0,393.2M347.8,307.9L352.5,303.2M319.6,312.9L320.5,311.8M370.2,323.2L376.7,323.5M327.7,284.2L323.4,292.2M322.5,337.2L327.0,346.1M270.8,324.8L273.4,323.0M306.2,289.5L308.8,298.5M331.8,285.0L328.8,291.9M363.3,383.2L367.5,380.6M307.3,326.9L310.8,329.4M371.0,296.1L371.8,298.6M314.9,290.0L315.2,297.4M342.2,314.1L341.5,311.4M405.0,388.6L409.5,388.2M402.2,351.4L405.3,355.6M340.7,311.6L341.7,308.5M345.0,333.1L353.4,334.2M407.0,312.3L410.5,321.6M386.3,300.8L389.0,305.3M297.5,398.5L301.8,397.9M296.0,360.8L298.1,365.0M385.8,340.8L387.3,340.6M406.6,307.0L404.8,311.9M392.9,301.9L396.3,306.1M280.8,311.3L284.1,316.5M305.6,306.5L301.4,311.9M334.5,364.1L334.1,369.7M278.3,351.0L280.9,348.1M280.2,367.3L287.6,370.0M371.9,371.5L373.7,377.2M319.5,312.5L319.6,312.9M326.6,305.9L327.4,311.1M278.6,360.9L284.4,361.4M385.7,317.9L382.4,322.0M376.9,369.6L382.6,376.3M326.5,354.0L328.3,355.0M332.3,383.0L330.5,386.8M362.7,323.6L366.6,329.5M317.0,365.4L324.2,366.7M278.7,328.1L276.1,334.9M325.5,393.6L323.8,397.9M269.8,380.4L275.0,384.9M361.6,361.8L364.8,358.6M356.1,370.0L360.7,371.0M376.6,300.4L376.2,298.5M335.8,308.4L334.3,309.2M315.1,388.1L312.5,393.3M349.1,393.7L356.6,396.4M410.8,291.2L407.9,302.6M399.7,376.2L404.1,377.4M306.1,284.2L306.2,289.5M334.3,345.9L336.9,347.9M291.1,386.3L297.3,387.5M357.7,307.0L353.6,308.2M346.3,306.7L352.5,303.2M349.3,292.5L344.7,298.0M314.1,313.5L310.7,315.2M342.9,344.8L344.7,349.5M373.4,350.4L381.5,353.9M299.7,318.7L295.8,321.2M296.3,354.5L296.0,360.8M338.7,308.1L336.1,312.4M387.3,334.7L394.1,331.8M332.3,362.1L334.5,364.1M280.5,342.8L286.1,344.1M276.9,308.8L280.8,311.3M333.0,306.3L335.8,308.4M369.0,288.0L373.9,286.8M333.8,317.9L330.3,313.2M376.7,366.8L371.9,371.5M373.4,302.9L376.4,300.1M325.5,370.3L324.4,374.2M318.7,313.7L318.4,316.1M314.3,364.5L316.2,372.7M269.6,376.9L266.6,380.2M338.7,308.1L335.8,308.4M354.3,319.2L358.5,321.7M409.5,388.2L408.2,397.9M396.8,324.8L401.5,328.0M376.6,300.4L376.5,302.8M305.4,381.6L307.9,388.7M345.4,302.5L346.3,306.7M363.3,317.9L362.7,323.6M309.3,303.6L312.9,302.6M316.4,329.1L315.0,333.3M301.4,311.9L308.9,312.6M402.0,325.1L401.5,328.0M295.8,321.2L295.9,321.5M395.8,370.1L401.8,369.2M333.8,317.9L336.1,312.4M398.1,334.7L394.5,338.9M340.3,318.0L343.6,317.3M304.4,390.3L301.8,397.9M298.9,334.9L295.4,337.3M388.5,314.4L392.2,313.7M287.8,381.3L292.3,383.3M387.2,390.4L391.5,399.0M289.9,342.5L289.8,350.1M382.4,322.0L387.5,324.3M377.0,345.8L377.0,348.2M330.5,386.8L335.7,388.3M319.5,291.1L320.9,297.9M373.2,382.4L377.5,381.8M276.1,334.9L280.9,335.1M270.1,354.1L273.4,359.8M368.4,305.4L367.4,304.0M336.9,295.5L336.5,301.4M366.7,390.7L374.1,394.0M266.2,318.9L264.9,329.3M323.4,292.2L328.0,295.8M265.7,393.2L270.4,393.0M289.9,361.8L285.5,364.4M306.5,359.9L314.3,364.5M398.1,303.6L398.8,305.4M279.9,302.8L273.4,307.8M348.8,365.6L351.3,369.6M402.1,299.9L406.6,307.0M358.8,344.8L365.1,343.1M360.4,312.4L354.3,319.2M365.9,370.1L364.0,377.3M353.4,367.5L356.1,370.0M312.8,317.8L309.2,321.2M297.7,311.2L299.7,318.7M395.7,349.9L402.2,351.4M395.1,317.8L396.8,324.8M345.1,375.4L345.9,380.1M333.8,317.9L340.5,321.9M313.6,313.0L315.9,312.6M338.7,308.1L342.2,306.0M340.7,393.9L335.7,397.4M325.1,388.3L325.5,393.6M393.4,328.2L394.1,331.8M383.0,298.2L384.0,298.8M378.5,315.9L385.7,317.9M344.3,390.8L341.7,395.5M391.3,297.2L393.5,297.8M270.5,326.8L278.7,328.1M371.9,340.6L377.0,345.8M309.2,321.2L308.6,318.8M297.8,287.2L289.4,290.6M320.0,322.4L324.2,323.6M357.1,290.9L359.1,295.7M365.0,348.8L367.8,355.4M315.0,333.3L320.9,335.2M265.4,349.5L270.1,354.1M357.5,326.8L359.3,330.2M298.8,292.3L304.9,295.0M408.8,355.0L407.4,360.1M349.0,339.9L354.7,337.1M309.3,355.1L306.5,359.9M273.4,307.8L269.4,313.1M333.6,310.4L335.2,309.1M302.5,365.6L299.5,371.7M354.7,337.1L360.1,337.2M378.3,295.1L382.9,296.0M392.5,342.7L397.8,342.6M342.7,360.8L348.8,365.6M297.8,287.2L306.1,284.2M397.8,342.6L401.4,345.0M284.5,354.3L290.6,354.4M340.3,290.4L349.3,292.5M351.5,319.4L347.3,322.8M290.6,354.4L296.3,354.5M346.7,312.8L347.8,307.9M353.6,308.2L354.4,309.5M378.3,295.1L383.0,298.2M385.8,376.1L384.9,379.5M326.3,359.9L332.3,362.1M328.7,324.0L325.9,326.5M326.3,309.9L322.9,311.6M280.8,385.3L277.5,393.6M367.4,366.8L376.7,366.8M322.5,337.2L320.4,344.4M315.9,391.4L321.1,398.0M309.1,334.8L309.3,338.9M396.5,291.7L395.0,295.2M329.6,338.7L327.0,346.1M346.7,312.8L343.6,308.1M273.5,285.9L270.6,291.2M298.0,383.0L305.4,381.6M342.0,302.3L342.2,306.0M314.9,290.0L308.8,298.5M312.8,317.8L316.2,315.5M355.6,286.6L357.1,290.9M402.2,351.4L397.1,354.3M385.4,344.0L388.6,348.1M319.5,312.5L315.9,312.6M340.8,384.9L348.2,388.3M407.8,349.4L405.3,355.6M281.9,356.5L284.4,361.4M348.2,388.3L353.8,387.1M328.3,312.5L324.9,316.4M376.7,392.5L382.2,393.5M392.9,301.9L389.0,305.3M331.8,285.0L336.7,285.9M299.7,361.0L298.1,365.0M289.3,302.1L287.1,306.9M326.6,310.8L328.3,312.5M371.0,296.1L376.2,298.5M273.5,285.9L281.4,286.0M382.2,393.5L387.2,390.4M285.5,311.2L284.1,316.5M336.7,285.9L344.1,287.4M373.9,290.3L382.0,290.6M280.2,367.3L281.3,372.1M326.6,305.9L332.6,310.1M382.0,290.6L385.5,289.6M269.7,303.8L272.3,302.4M376.9,369.6L373.7,377.2M378.3,295.1L376.2,298.5M362.5,366.6L365.9,370.1M326.7,318.7L328.7,324.0M272.3,302.4L279.9,302.8M356.7,375.6L363.3,383.2M384.6,370.1L382.6,376.3M269.8,380.4L269.1,386.0M265.8,286.2L266.3,298.1M404.8,364.7L410.1,365.2M370.2,323.2L366.6,329.5M309.2,307.2L317.9,308.6M387.5,324.3L393.4,328.2M277.5,382.2L275.0,384.9M349.1,393.7L351.7,398.5M296.4,374.4L304.3,375.8M404.7,327.1L406.8,332.5M362.5,301.4L358.7,303.9M354.5,313.7L360.4,312.4M335.7,388.3L340.7,393.9M306.1,284.2L300.7,290.3M332.3,383.0L337.7,381.7M300.0,340.0L302.1,345.0M388.8,319.0L395.1,317.8M391.3,297.2L392.6,298.1M302.8,316.8L308.5,315.1M312.9,287.9L306.2,289.5M306.7,318.6L306.5,317.4M342.9,344.8L336.9,347.9M284.1,326.9L288.0,329.1M378.8,387.5L386.5,385.7M367.8,293.3L371.0,296.1M377.0,348.2L381.5,353.9M288.0,329.1L291.9,327.2M325.7,334.8L331.6,333.3M332.3,362.1L331.3,365.9M278.3,351.0L281.9,356.5M342.2,306.0L338.0,307.5M274.2,395.6L278.8,396.5M356.6,353.2L364.8,358.6M273.4,359.8L276.2,364.9M331.6,333.3L337.0,332.0M360.1,337.2L365.3,340.0M369.3,303.3L373.3,307.5M347.8,307.9L346.3,306.7M282.0,307.9L280.8,311.3M337.5,306.9L335.8,308.4M278.6,360.9L280.2,367.3M314.3,364.5L309.1,370.4M365.3,340.0L371.9,340.6M401.4,345.0L409.0,344.8M317.0,365.4L316.2,372.7M351.3,369.6L352.1,376.7M342.2,306.0L343.6,308.1M363.3,317.9L358.5,321.7M356.1,370.0L356.7,375.6M346.7,312.8L351.5,319.4M301.1,355.2L309.3,355.1M311.1,380.5L307.9,388.7M340.5,321.9L343.0,327.2M354.5,313.7L354.4,309.5M399.7,376.2L393.2,380.9M336.9,359.4L342.7,360.8M333.3,339.4L334.3,345.9M340.3,318.0L336.1,312.4M291.1,386.3L286.7,392.2M278.4,322.8L287.0,324.7M379.0,364.6L387.4,363.9M387.2,390.4L386.2,398.3M375.2,386.3L376.7,392.5M373.3,307.5L376.5,302.8M320.9,335.2L322.5,337.2M395.8,391.3L391.5,399.0M281.4,286.0L286.8,290.4M338.2,338.1L334.3,345.9M281.5,376.5L283.8,375.0M323.4,292.2L320.9,297.9M369.0,288.0L367.8,293.3M364.7,333.1L370.3,334.0M391.3,297.2L386.6,299.6M318.2,383.4L323.4,381.8M310.5,358.8L314.3,364.5M299.7,318.7L302.8,316.8M402.5,338.0L406.1,340.7M402.1,299.9L398.8,305.4M344.1,287.4L350.1,286.6M397.1,354.3L399.6,360.4M359.1,295.7L362.5,301.4M353.4,367.5L351.3,369.6M295.2,348.5L299.3,348.6M407.9,302.6L406.6,307.0M297.7,311.2L292.4,316.4M350.1,286.6L355.6,286.6M385.5,289.6L390.2,291.6M289.2,367.3L292.1,370.0M395.1,317.8L393.8,322.4M391.2,371.1L390.4,377.0M299.3,348.6L306.6,349.1M336.2,355.2L343.7,355.5M301.4,311.9L299.7,318.7M333.8,317.9L334.3,323.1M390.2,291.6L396.5,291.7M330.3,313.2L328.3,312.5M279.9,302.8L284.8,303.9M401.2,316.1L396.8,324.8M395.8,370.1L399.7,376.2M282.0,383.1L287.6,387.1M343.7,355.5L348.5,353.2M371.0,359.1L376.8,361.1M340.3,318.0L340.5,321.9M284.8,303.9L289.3,302.1M291.9,327.2L291.6,333.7M287.8,381.3L291.1,386.3M325.1,388.3L322.4,390.2M376.8,361.1L384.0,359.1M267.8,369.2L273.0,369.6M320.5,311.8L323.1,313.3M382.4,322.0L378.1,328.1M322.9,309.0L326.6,305.9M362.7,391.4L365.1,396.3M273.0,369.6L277.4,370.9M308.1,376.7L314.8,377.4M276.1,334.9L270.5,340.6M364.7,311.3L370.6,313.8M371.9,340.6L368.5,346.2M357.2,335.5L360.1,337.2M366.7,390.7L368.6,397.5M314.8,377.4L318.7,375.4M309.3,338.9L314.0,344.0M353.6,344.6L356.8,347.9M320.5,284.1L319.5,291.1M350.2,379.7L353.5,380.1M270.3,349.0L270.1,354.1M300.7,290.3L304.9,295.0M391.1,386.3L396.4,385.0M358.8,344.8L356.8,347.9M300.4,330.0L307.3,326.9M342.7,360.8L340.8,364.5M286.5,396.1L289.8,396.2M295.3,308.9L297.7,311.2M395.7,349.9L397.1,354.3M382.7,284.3L390.4,285.6M289.9,361.8L298.1,365.0M351.2,358.9L348.8,365.6M378.7,302.3L381.5,305.7M334.4,312.3L333.8,317.9M279.0,297.9L281.7,295.4M331.3,365.9L334.1,369.7M395.0,295.2L396.6,293.9M376.2,298.5L375.4,299.0M275.8,314.3L278.6,316.1M372.6,317.8L376.7,323.5M321.0,303.4L324.4,303.1M384.0,298.8L386.6,299.6M308.7,317.0L308.6,318.8M378.5,315.9L382.4,322.0M264.9,329.3L268.9,331.8M324.4,303.1L332.0,302.2M357.7,307.0L359.3,305.3M323.4,381.8L318.8,386.4M352.3,322.8L357.5,326.8M270.5,326.8L276.1,334.9M309.1,334.8L303.2,340.7M396.8,314.1L404.8,311.9M303.5,387.7L304.4,390.3M345.1,339.2L346.6,343.4M404.8,311.9L407.0,312.3M307.9,388.7L312.5,393.3M306.5,317.4L308.7,317.0M366.1,301.3L367.4,304.0M402.2,393.5L397.6,396.0M295.4,323.6L298.4,322.9M355.6,286.6L351.9,292.8M349.0,339.9L353.6,344.6M359.4,301.5L358.7,303.9M334.3,291.0L336.9,295.5M361.0,285.1L357.1,290.9M290.6,339.6L296.9,342.8M392.5,342.7L388.6,348.1M333.4,328.5L339.1,327.0M297.8,287.2L300.7,290.3M319.6,312.9L323.1,313.3M337.5,306.9L338.0,307.5M284.5,354.3L284.4,361.4M375.3,333.3L383.0,334.3M340.3,290.4L336.9,295.5M323.8,397.9L328.6,399.2M321.5,358.9L324.2,366.7M269.8,344.2L276.5,345.6M326.7,318.7L330.3,313.2M326.3,359.9L331.3,365.9M362.5,366.6L360.7,371.0M276.5,345.6L280.5,342.8M306.6,349.1L311.5,351.6M333.0,306.3L332.6,310.1M365.0,302.2L366.1,301.3M367.4,366.8L365.9,370.1M401.8,369.2L404.1,377.4M311.5,351.6L315.6,349.8M348.5,353.2L353.0,356.1M404.4,369.2L407.5,377.9M292.3,383.3L297.3,387.5M353.0,356.1L356.6,353.2M384.0,359.1L387.8,359.3M363.3,383.2L359.5,385.9M393.8,322.4L393.4,328.2M333.6,310.4L334.3,309.2M298.0,383.0L303.5,387.7M335.7,388.3L332.4,392.0M387.8,359.3L393.4,361.2M405.0,388.6L395.8,391.3M286.2,333.3L290.6,339.6M384.6,370.1L391.2,371.1M280.8,385.3L286.7,392.2M281.3,372.1L287.6,370.0M327.7,284.2L328.8,291.9M291.6,333.7L295.4,337.3M385.8,340.8L378.8,342.5M376.7,392.5L382.9,395.4M324.4,374.2L330.0,376.9M331.8,285.0L334.3,291.0M317.9,308.6L320.5,311.8M365.1,343.1L365.0,348.8M387.3,340.6L385.4,344.0M278.3,351.0L273.6,354.5M373.9,290.3L371.0,296.1M368.5,346.2L373.4,350.4M320.8,317.9L323.1,313.3M278.6,360.9L276.2,364.9M297.5,398.5L309.7,397.7M269.7,303.8L264.7,305.9M355.0,303.4L352.5,303.2M272.3,302.4L273.4,307.8M305.6,306.5L308.9,312.6M396.3,285.5L402.4,287.4M334.5,364.1L339.1,370.6M361.6,361.8L357.4,365.6M404.8,364.7L401.8,369.2M344.7,349.5L350.8,348.8M356.1,370.0L352.1,376.7M346.7,312.8L343.6,317.3M402.4,287.4L403.8,284.8M289.5,298.4L292.7,298.4M340.8,364.5L342.2,372.8M296.4,374.4L292.3,383.3M385.2,356.0L392.1,356.0M354.5,313.7L351.5,319.4M385.7,317.9L387.5,324.3M292.7,298.4L301.3,297.0M332.0,302.2L336.5,301.4M318.7,313.7L316.3,313.8M320.0,322.4L316.1,316.8M332.3,383.0L335.7,388.3M388.8,319.0L393.8,322.4M278.7,328.1L280.9,335.1M336.5,301.4L342.0,302.3M318.7,313.7L315.9,312.6M375.2,386.3L374.1,394.0M332.3,313.4L334.4,312.3M284.1,326.9L286.2,333.3M320.9,335.2L314.9,339.0M373.3,307.5L377.2,308.4M315.1,388.1L315.9,391.4M378.8,387.5L376.7,392.5M336.1,312.4L335.2,309.1M323.5,371.4L325.5,370.3M367.1,316.6L372.6,317.8M325.7,334.8L322.5,337.2M266.2,318.9L271.5,315.9M318.8,386.4L322.4,390.2M364.0,377.3L371.0,376.5M369.0,288.0L365.6,291.9M309.2,321.2L312.3,322.0M359.5,385.9L364.4,385.0M349.3,292.5L350.5,295.7M400.7,380.1L406.1,380.5M401.4,345.0L402.2,351.4M296.3,354.5L299.7,361.0M343.0,327.2L351.5,330.4M382.9,296.0L386.6,299.6M395.8,391.3L402.2,393.5M351.9,292.8L357.4,295.4M296.0,390.0L298.5,391.2M312.8,317.8L316.1,316.8M335.7,397.4L341.7,395.5M376.7,366.8L376.9,369.6M399.6,360.4L399.6,365.8M318.7,313.7L320.8,317.9M395.8,370.1L390.4,377.0M328.0,295.8L331.8,297.5M269.6,376.9L269.8,380.4M292.1,370.0L289.7,374.6M278.4,322.8L278.7,328.1M287.8,381.3L287.6,387.1M379.0,364.6L376.9,369.6M273.0,375.7L277.5,382.2M371.0,296.1L375.4,299.0M363.3,317.9L370.2,323.2M317.5,362.2L321.5,358.9M316.4,329.1L320.9,335.2M295.4,323.6L294.5,321.3M373.2,382.4L367.9,386.5M402.0,325.1L404.7,327.1M357.4,365.6L362.5,366.6M357.2,335.5L354.7,337.1M269.4,313.1L275.8,314.3M366.7,390.7L365.1,396.3M353.8,387.1L357.3,390.8M304.4,390.3L309.7,397.7M298.9,334.9L300.0,340.0M364.7,333.1L360.1,337.2M385.5,289.6L382.9,296.0M292.7,319.3L294.5,321.3M301.3,335.3L303.2,340.7M377.0,345.8L383.0,350.5M402.5,338.0L401.4,345.0M347.3,322.8L352.3,322.8M344.1,287.4L349.3,292.5M340.9,333.6L345.0,333.1M295.2,348.5L296.3,354.5M384.0,326.5L390.1,329.8M395.7,349.9L392.1,356.0M289.9,361.8L289.2,367.3M379.1,337.2L385.8,340.8M336.2,355.2L332.3,362.1M277.4,339.0L284.9,339.3M279.9,302.8L276.9,308.8M273.6,354.5L278.6,360.9M353.7,360.0L348.8,365.6M371.0,359.1L376.7,366.8M320.4,344.4L327.0,346.1M360.4,312.4L363.3,317.9M381.5,305.7L379.5,314.1M342.2,314.1L340.7,311.6M267.8,369.2L269.6,376.9M378.5,315.9L376.7,323.5M278.6,316.1L273.4,323.0M298.4,322.9L301.4,318.4M308.1,376.7L305.4,381.6M270.5,326.8L268.9,331.8M364.7,311.3L363.3,317.9M295.8,321.2L294.5,321.3M353.7,360.0L361.6,361.8M301.3,306.7L305.6,306.5M307.9,388.7L304.4,390.3M399.6,365.8L404.8,364.7M353.6,308.2L352.5,303.2M325.1,388.3L332.4,392.0M385.7,300.9L386.6,299.6M342.2,314.1L346.7,312.8M320.5,311.8L322.9,311.6M349.0,339.9L346.6,343.4M337.0,332.0L338.2,338.1M344.3,390.8L347.6,396.4M289.7,374.6L296.4,374.4M391.1,386.3L387.2,390.4M290.6,339.6L289.9,342.5M304.3,321.6L298.4,322.9M354.7,337.1L353.6,344.6M371.9,340.6L378.8,342.5M297.8,287.2L298.8,292.3M325.9,382.7L332.3,383.0M386.3,300.8L385.7,300.9M373.7,377.2L382.6,376.3M382.7,284.3L385.5,289.6M296.2,322.0L297.7,321.3M367.9,386.5L375.2,386.3M269.1,386.0L275.0,384.9M279.0,297.9L279.9,302.8M309.3,355.1L310.5,358.8M365.6,291.9L366.6,294.8M361.0,285.1L369.0,288.0M321.0,303.4L317.9,308.6M326.3,359.9L324.2,366.7M308.9,312.6L308.5,315.1M315.1,355.2L317.5,362.2M395.6,296.9L396.6,293.9M269.7,399.1L274.2,395.6M345.0,307.2L342.2,306.0M357.7,307.0L360.4,312.4M407.5,377.9L409.5,388.2M369.3,303.3L366.1,301.3M326.6,310.8L326.3,309.9M404.4,369.2L404.1,377.4M396.8,314.1L395.1,317.8M398.8,294.7L396.6,293.9M391.9,365.4L395.8,370.1M376.6,300.4L376.4,300.1M304.6,371.5L304.3,375.8M303.4,302.7L309.3,303.6M385.8,376.1L387.9,381.3M298.0,383.0L297.3,387.5M283.8,375.0L287.8,381.3M365.0,302.2L367.4,304.0M291.6,333.7L290.6,339.6M379.5,314.1L388.5,314.4M309.1,334.8L314.9,339.0M376.7,392.5L373.8,398.9M398.8,294.7L400.0,297.2M364.4,385.0L366.7,390.7M329.6,338.7L331.4,343.3M332.3,313.4L333.6,310.4M273.4,323.0L278.4,322.8M375.3,333.3L371.9,340.6M273.5,285.9L276.5,290.9M382.2,393.5L382.9,395.4M318.4,316.1L320.8,317.9M336.7,285.9L334.3,291.0M402.2,393.5L408.2,397.9M368.5,346.2L365.0,348.8M310.8,329.4L316.4,329.1M269.8,344.2L265.4,349.5M358.5,321.7L362.7,323.6M407.8,349.4L408.8,355.0M396.5,291.7L398.8,294.7M353.4,334.2L357.2,335.5M306.6,349.1L309.3,355.1M402.6,291.1L403.9,298.2M357.7,307.0L354.4,309.5M289.3,302.1L295.3,308.9M299.7,361.0L302.5,365.6M387.3,340.6L394.5,338.9M309.2,307.2L308.9,312.6M297.8,303.5L301.3,306.7M340.8,364.5L339.1,370.6M280.9,348.1L289.8,350.1M308.9,312.6L310.3,315.2M384.0,359.1L387.4,363.9M289.8,350.1L295.2,348.5M388.8,319.0L387.5,324.3M364.7,311.3L367.4,304.0M375.8,313.4L378.5,315.9M384.6,370.1L385.8,376.1M328.3,355.0L336.2,355.2M287.7,319.0L287.0,324.7M370.2,323.2L371.6,328.3M284.1,326.9L280.9,335.1M277.5,382.2L280.8,385.3M270.8,324.8L270.5,326.8M364.8,358.6L371.0,359.1M288.0,329.1L286.2,333.3M318.8,386.4L315.9,391.4M335.7,388.3L344.3,390.8M405.0,388.6L406.9,390.5M360.1,337.2L358.8,344.8M304.3,321.6L301.4,318.4M357.3,390.8L356.6,396.4M345.0,333.1L349.0,339.9M304.3,375.8L308.1,376.7M312.9,287.9L314.9,290.0M365.3,340.0L365.1,343.1M401.4,345.0L395.7,349.9M295.9,321.5L294.5,321.3M337.7,381.7L345.9,380.1M351.9,292.8L350.5,295.7M396.3,285.5L396.5,291.7M278.3,351.0L284.5,354.3M345.9,380.1L350.2,379.7M391.3,297.2L392.9,301.9M334.3,309.2L332.6,310.1M289.5,298.4L289.3,302.1M386.5,385.7L391.1,386.3M385.2,356.0L384.0,359.1M282.0,307.9L285.5,311.2M373.9,286.8L377.2,284.9M332.0,302.2L326.6,305.9M336.9,359.4L334.5,364.1M323.1,351.3L327.3,349.1M278.8,396.5L286.5,396.1M377.2,284.9L382.7,284.3M266.3,298.1L270.2,295.2M317.0,365.4L323.5,371.4M273.0,375.7L269.8,380.4M361.6,361.8L367.4,366.8M365.0,356.5L367.8,355.4M270.2,295.2L279.0,297.9M316.3,313.8L318.2,316.0M359.4,301.5L355.3,303.8M311.1,380.5L315.1,388.1M399.6,360.4L407.4,360.1M367.1,316.6L370.2,323.2M312.9,302.6L321.0,303.4M399.7,376.2L400.7,380.1M353.8,387.1L349.1,393.7M292.1,370.0L299.5,371.7M410.5,321.6L404.7,327.1M291.1,386.3L296.0,390.0M318.2,383.4L315.1,388.1M359.5,385.9L357.3,390.8M299.5,371.7L304.6,371.5M338.1,377.3L342.3,376.5M301.3,335.3L300.0,340.0M392.2,313.7L396.8,314.1M390.2,291.6L382.9,296.0M402.5,338.0L397.8,342.6M395.8,391.3L397.6,396.0M387.3,334.7L387.3,340.6M342.3,376.5L345.1,375.4M309.2,307.2L313.6,313.0M344.1,287.4L340.3,290.4M338.2,338.1L342.9,344.8M287.0,324.7L291.1,322.4M295.2,348.5L290.6,354.4M310.3,315.2L308.7,317.0M280.5,342.8L280.9,348.1M319.5,312.5L320.5,311.8M350.1,286.6L349.3,292.5M377.5,381.8L384.9,379.5M369.0,288.0L373.9,290.3M291.1,322.4L295.4,323.6M320.6,326.7L325.9,326.5M299.3,348.6L296.3,354.5M270.4,393.0L277.5,393.6M273.6,354.5L273.4,359.8M325.9,326.5L333.4,328.5M371.0,359.1L367.4,366.8M277.5,393.6L281.0,393.2M312.4,396.5L321.1,398.0M370.3,334.0L375.3,333.3M376.8,361.1L376.7,366.8M321.1,398.0L323.8,397.9M350.1,286.6L361.0,285.1M317.5,362.2L317.0,365.4M309.3,303.6L309.2,307.2M304.9,295.0L308.8,298.5M401.2,316.1L402.0,325.1M357.4,365.6L356.1,370.0M398.1,334.7L397.8,342.6M388.5,314.4L388.8,319.0M381.5,305.7L389.0,305.3M350.2,379.7L348.2,388.3M382.4,322.0L384.0,326.5M406.2,317.5L402.0,325.1M359.3,330.2L353.4,334.2M278.6,316.1L284.1,316.5M330.5,386.8L332.4,392.0M353.5,380.1L353.8,387.1M276.1,334.9L277.4,339.0M300.4,330.0L298.9,334.9M340.9,333.6L338.2,338.1M284.1,316.5L287.7,319.0M287.7,319.0L292.7,319.3M382.7,284.3L382.0,290.6M379.1,337.2L378.8,342.5M324.2,323.6L328.7,324.0M296.2,322.0L295.9,321.5M320.5,284.1L323.4,292.2M279.0,297.9L272.3,302.4M270.3,349.0L273.6,354.5M359.3,330.2L366.6,329.5M331.4,351.1L326.5,354.0M365.6,291.9L359.1,295.7M358.8,344.8L359.9,350.2M315.1,355.2L310.5,358.8M366.6,329.5L371.6,328.3M402.1,333.3L406.8,332.5M286.5,396.1L297.5,398.5M308.5,315.1L308.7,317.0M317.8,355.9L317.5,362.2M296.9,342.8L302.1,345.0M403.9,298.2L407.9,302.6M359.3,305.3L360.4,312.4M353.7,360.0L357.4,365.6M306.7,318.6L308.7,317.0M334.4,312.3L336.1,312.4M391.9,365.4L391.2,371.1M302.1,345.0L307.8,343.3M331.4,351.1L336.9,347.9M301.3,306.7L301.4,311.9M390.4,285.6L396.3,285.5M399.6,365.8L395.8,370.1M336.9,347.9L344.7,349.5M341.5,311.4L341.7,308.5M373.6,355.9L381.5,353.9M342.2,314.1L340.3,318.0M340.7,311.6L338.7,308.1M281.7,295.4L289.5,298.4M312.8,317.8L308.7,317.0M314.1,313.5L316.3,313.8M289.7,374.6L287.8,381.3M323.4,381.8L325.1,388.3M381.5,353.9L385.2,356.0M267.7,367.0L276.2,364.9M314.1,313.5L315.9,312.6M333.4,328.5L331.6,333.3M325.9,382.7L330.5,386.8M369.3,303.3L367.4,304.0M364.4,385.0L362.7,391.4M276.2,364.9L280.2,367.3M304.6,371.5L309.1,370.4M315.0,333.3L314.9,339.0M339.1,327.0L337.0,332.0M265.4,349.5L267.0,361.0M403.9,298.2L400.0,297.2M357.4,295.4L352.5,303.2M367.9,386.5L366.7,390.7M366.1,301.3L362.5,301.4M402.2,393.5L403.4,397.9M309.1,370.4L316.2,372.7M408.8,355.0L410.1,365.2M406.9,390.5L408.2,397.9M352.1,376.7L356.7,375.6M361.0,285.1L365.6,291.9M392.5,342.7L395.7,349.9M306.6,349.1L301.1,355.2M387.9,381.3L393.2,380.9M402.6,291.1L398.8,294.7M349.2,308.6L353.6,308.2M284.5,354.3L289.9,361.8M311.5,351.6L309.3,355.1M340.3,290.4L344.7,298.0M281.0,393.2L286.7,392.2M297.8,303.5L295.3,308.9M290.6,354.4L296.0,360.8M384.0,359.1L379.0,364.6M316.3,313.8L315.9,312.6M303.4,302.7L301.3,306.7M278.1,291.8L286.8,290.4M387.8,359.3L387.4,363.9M342.2,372.8L338.1,377.3M328.6,399.2L335.7,397.4M375.8,313.4L372.6,317.8M286.8,290.4L289.4,290.6M315.2,297.4L320.9,297.9M367.4,366.8L371.9,371.5M281.3,372.1L281.5,376.5M343.6,308.1L341.5,311.4M379.5,314.1L378.5,315.9M386.3,300.8L386.6,299.6M270.8,324.8L264.9,329.3M320.9,297.9L328.0,295.8M306.7,318.6L308.6,318.8M363.3,383.2L364.4,385.0M307.0,367.5L314.3,364.5M273.4,323.0L270.5,326.8M307.3,326.9L309.1,334.8M396.3,306.1L398.8,305.4M405.0,388.6L402.2,393.5M359.4,301.5L362.5,301.4M376.4,300.1L376.2,298.5M342.2,372.8L351.3,369.6M310.8,329.4L315.0,333.3M345.0,333.1L345.1,339.2M398.8,305.4L406.6,307.0M287.7,319.0L292.4,316.4M340.8,384.9L344.3,390.8M365.3,340.0L358.8,344.8M353.4,334.2L349.0,339.9M382.0,290.6L382.9,296.0M385.8,340.8L385.4,344.0M292.4,316.4L299.7,318.7M348.2,388.3L349.1,393.7M390.4,377.0L399.7,376.2M387.3,340.6L392.5,342.7M334.3,323.1L340.5,321.9M344.7,349.5L343.7,355.5M373.9,290.3L378.3,295.1M402.4,287.4L396.5,291.7M287.6,387.1L291.1,386.3M289.5,298.4L284.8,303.9M280.9,348.1L284.5,354.3M371.6,328.3L378.1,328.1M269.7,303.8L273.4,307.8M292.7,298.4L289.3,302.1M322.4,390.2L325.5,393.6M326.5,354.0L321.5,358.9M265.5,337.4L270.5,340.6M365.1,396.3L368.6,397.5M396.3,285.5L403.8,284.8M392.9,301.9L393.5,297.8M328.3,355.0L326.3,359.9M361.6,361.8L362.5,366.6M270.5,340.6L277.4,339.0M404.8,364.7L404.4,369.2M307.8,343.3L314.0,344.0M373.3,307.5L370.6,313.8M364.8,358.6L367.4,366.8M314.0,344.0L320.4,344.4M296.4,374.4L298.0,383.0M323.5,371.4L318.7,375.4M354.5,313.7L354.3,319.2M410.1,365.2L404.4,369.2M350.8,348.8L356.8,347.9M304.3,375.8L298.0,383.0M392.1,356.0L397.1,354.3M400.7,380.1L396.4,385.0M387.4,363.9L391.9,365.4M343.0,327.2L340.9,333.6M387.3,334.7L385.8,340.8M337.7,381.7L340.8,384.9M378.8,387.5L382.2,393.5M384.0,298.8L382.9,296.0M296.0,390.0L289.8,396.2M325.7,334.8L329.6,338.7M331.6,333.3L333.3,339.4M318.7,313.7L319.6,312.9M376.7,323.5L382.4,322.0M373.9,286.8L373.9,290.3M357.7,307.0L354.4,304.1M328.0,295.8L324.4,303.1M401.4,345.0L407.8,349.4M323.1,351.3L326.5,354.0M268.9,331.8L276.1,334.9M306.5,317.4L308.5,315.1M266.3,298.1L269.7,303.8M351.5,330.4L359.3,330.2M303.2,340.7L309.3,338.9M270.2,295.2L272.3,302.4M395.6,296.9L395.0,295.2M317.5,362.2L314.3,364.5M335.7,397.4L347.6,396.4M309.3,303.6L305.6,306.5M301.1,355.2L306.5,359.9M340.7,311.6L336.1,312.4M399.6,360.4L404.8,364.7M346.6,343.4L353.6,344.6M312.9,302.6L309.2,307.2M337.5,306.9L342.2,306.0M289.4,290.6L298.8,292.3M292.1,370.0L296.4,374.4M383.0,350.5L388.6,348.1M349.2,308.6L354.5,313.7M388.5,314.4L385.7,317.9M298.8,292.3L300.7,290.3M278.4,322.8L284.1,326.9M379.0,364.6L384.6,370.1M306.7,318.6L304.3,321.6M338.1,377.3L332.3,383.0M392.2,313.7L388.8,319.0M331.8,297.5L336.9,295.5M342.3,376.5L337.7,381.7M373.2,382.4L375.2,386.3M347.8,307.9L343.6,308.1M300.4,330.0L291.6,333.7M333.0,306.3L334.3,309.2M287.0,324.7L284.1,326.9M277.4,370.9L281.3,372.1M384.0,326.5L383.0,334.3M355.0,303.4L354.4,304.1M318.7,313.7L318.2,316.0M377.5,381.8L378.8,387.5M265.7,393.2L269.7,399.1M324.2,366.7L331.3,365.9M370.6,313.8L375.8,313.4M320.6,326.7L325.7,334.8M364.7,333.1L365.3,340.0M292.4,316.4L292.7,319.3M318.7,375.4L324.4,374.2M277.4,339.0L276.5,345.6M270.4,393.0L274.2,395.6M360.7,371.0L365.9,370.1M403.8,284.8L410.8,291.2M390.2,291.6L395.0,295.2M353.5,380.1L363.3,383.2M404.1,377.4L407.5,377.9M334.3,309.2L335.2,309.1M326.6,305.9L326.3,309.9M396.4,385.0L405.0,388.6M407.9,302.6L407.0,312.3M297.3,387.5L303.5,387.7M336.2,355.2L336.9,359.4M403.9,298.2L402.1,299.9M289.8,396.2L297.5,398.5M279.9,302.8L282.0,307.9M332.4,392.0L340.7,393.9M345.4,302.5L345.0,307.2M353.7,360.0L353.4,367.5M289.0,287.2L292.2,285.2M343.7,355.5L342.7,360.8M392.9,301.9L392.6,298.1M301.3,306.7L297.7,311.2M284.8,303.9L287.1,306.9M373.8,398.9L382.9,395.4M381.5,305.7L388.5,314.4M328.8,291.9L334.3,291.0M267.8,369.2L273.0,375.7M327.0,346.1L334.3,345.9M278.6,316.1L278.4,322.8M366.6,294.8L371.0,296.1M308.1,376.7L311.1,380.5M334.1,369.7L330.0,376.9M364.7,311.3L367.1,316.6M320.0,322.4L316.4,329.1M325.9,382.7L325.1,388.3M314.8,377.4L318.2,383.4M378.7,302.3L376.5,302.8M324.2,323.6L320.6,326.7M359.3,330.2L364.7,333.1M391.1,386.3L395.8,391.3M354.7,337.1L358.8,344.8M300.4,330.0L309.1,334.8M304.3,321.6L309.2,321.2M402.1,333.3L402.5,338.0M343.6,317.3L351.5,319.4M295.3,308.9L292.4,316.4M397.8,342.6L395.7,349.9M339.1,327.0L343.0,327.2M296.9,342.8L295.2,348.5M375.4,299.0L371.8,298.6M387.5,324.3L393.8,322.4M338.7,308.1L341.7,308.5M290.6,354.4L289.9,361.8M383.0,334.3L387.3,334.7M331.4,351.1L336.2,355.2M280.9,335.1L286.2,333.3M321.0,303.4L322.9,309.0M374.1,394.0L376.7,392.5M269.7,399.1L278.8,396.5M373.6,355.9L371.0,359.1M314.9,339.0L322.5,337.2M264.9,329.3L265.5,337.4M324.4,303.1L326.6,305.9M373.4,302.9L376.6,300.4M393.4,361.2L387.4,363.9M267.7,367.0L267.8,369.2M396.8,314.1L401.2,316.1M315.6,349.8L323.1,351.3M304.6,371.5L308.1,376.7M392.9,301.9L386.6,299.6M404.8,311.9L406.2,317.5M356.6,353.2L365.0,356.5M304.3,321.6L302.8,316.8M310.8,329.4L309.1,334.8M295.4,323.6L300.4,330.0M393.4,361.2L399.6,360.4M365.0,302.2L362.5,301.4M348.2,388.3L344.3,390.8M287.6,370.0L292.1,370.0M387.9,381.3L391.1,386.3M375.3,333.3L379.1,337.2M330.0,376.9L338.1,377.3M336.7,285.9L340.3,290.4M281.0,393.2L286.5,396.1M371.9,371.5L376.9,369.6M394.5,338.9L392.5,342.7M269.8,344.2L270.3,349.0M367.5,380.6L373.2,382.4M382.0,290.6L378.3,295.1M322.9,309.0L320.5,311.8M278.1,291.8L279.0,297.9M289.8,350.1L284.5,354.3M315.2,297.4L321.0,303.4M348.5,353.2L351.2,358.9M301.8,397.9L309.7,397.7M353.6,308.2L354.4,304.1M353.0,356.1L353.7,360.0M309.7,397.7L312.4,396.5M307.0,367.5L304.6,371.5M396.3,306.1L396.8,314.1M342.2,372.8L345.1,375.4M322.9,309.0L322.9,311.6M301.3,297.0L304.9,295.0M287.7,319.0L291.1,322.4M285.5,364.4L289.2,367.3M342.0,302.3L345.4,302.5M337.7,381.7L335.7,388.3M366.1,301.3L371.8,298.6M288.0,329.1L291.6,333.7M377.2,308.4L381.5,305.7M345.9,380.1L340.8,384.9M331.6,333.3L329.6,338.7M271.5,315.9L278.6,316.1M371.6,328.3L375.3,333.3M371.0,376.5L373.7,377.2M312.3,322.0L320.0,322.4M323.1,351.3L317.8,355.9M265.5,337.4L269.8,344.2M354.3,319.2L363.3,317.9M377.2,284.9L373.9,290.3M409.0,344.8L407.8,349.4M351.5,330.4L357.5,326.8M346.7,312.8L341.5,311.4M307.8,343.3L306.6,349.1M298.5,391.2L304.4,390.3M402.4,287.4L410.8,291.2M301.1,355.2L299.7,361.0M394.1,331.8L398.1,334.7M385.2,356.0L387.8,359.3M341.7,395.5L347.6,396.4M332.0,302.2L333.0,306.3M398.1,334.7L402.1,333.3M336.9,359.4L340.8,364.5M286.1,344.1L289.9,342.5M407.4,360.1L404.8,364.7M328.3,312.5L327.4,311.1M347.6,396.4L351.7,398.5M349.2,308.6L346.7,312.8M336.5,301.4L337.5,306.9M357.7,307.0L358.7,303.9M289.9,342.5L296.9,342.8M317.9,308.6L319.5,312.5M299.5,371.7L296.4,374.4M289.0,312.4L287.7,319.0M332.3,313.4L333.8,317.9M387.4,363.9L384.6,370.1M327.3,349.1L331.4,351.1M266.2,318.9L273.4,323.0M281.5,376.5L277.5,382.2M367.8,355.4L373.6,355.9M326.7,318.7L328.3,312.5M377.5,381.8L375.2,386.3M364.0,377.3L367.5,380.6M320.6,326.7L320.9,335.2M318.2,383.4L318.8,386.4M359.5,385.9L362.7,391.4M270.4,393.0L269.7,399.1M325.9,326.5L325.7,334.8M350.5,295.7L352.5,303.2M387.3,334.7L394.5,338.9M277.5,393.6L274.2,395.6M310.3,315.2L310.7,315.2M350.1,286.6L351.9,292.8M304.9,295.0L303.4,302.7M406.1,340.7L401.4,345.0M299.3,348.6L301.1,355.2M390.1,329.8L393.4,328.2M345.1,375.4L352.1,376.7M390.2,291.6L391.3,297.2M289.4,290.6L289.5,298.4M343.7,355.5L336.9,359.4M284.9,339.3L290.6,339.6M383.0,350.5L385.2,356.0M284.8,303.9L282.0,307.9M308.8,298.5L303.4,302.7M398.1,303.6L400.0,297.2M335.8,308.4L338.0,307.5M376.8,361.1L379.0,364.6M327.0,346.1L331.4,343.3M321.1,398.0L328.6,399.2M270.6,291.2L276.5,290.9M317.5,362.2L324.2,366.7M273.0,369.6L273.0,375.7M331.4,343.3L334.3,345.9M359.9,350.2L365.0,348.8M276.5,290.9L278.1,291.8M357.4,365.6L360.7,371.0M284.1,316.5L278.4,322.8M277.4,370.9L281.5,376.5M314.8,377.4L311.1,380.5M365.0,348.8L373.4,350.4M405.3,355.6L408.8,355.0M373.4,302.9L371.8,298.6M370.6,313.8L367.1,316.6M308.8,298.5L315.2,297.4M299.7,318.7L297.7,321.3M318.7,375.4L318.2,383.4M350.2,379.7L353.8,387.1M349.2,308.6L352.5,303.2M298.1,365.0L302.5,365.6M406.2,317.5L410.5,321.6M355.0,303.4L359.4,301.5M359.3,330.2L357.2,335.5M347.3,322.8L351.5,330.4M353.5,380.1L359.5,385.9M302.5,365.6L307.0,367.5M334.1,369.7L339.1,370.6M300.4,330.0L301.3,335.3M340.9,333.6L345.1,339.2M389.0,305.3L396.3,306.1M366.6,329.5L364.7,333.1M287.0,324.7L291.9,327.2M396.4,385.0L395.8,391.3M339.1,370.6L342.2,372.8M406.8,332.5L402.5,338.0M382.6,376.3L385.8,376.1M331.4,351.1L328.3,355.0M320.4,344.4L323.1,351.3M390.4,285.6L385.5,289.6M275.0,384.9L280.8,385.3M358.8,344.8L365.0,348.8M328.7,324.0L334.3,323.1M336.9,347.9L336.2,355.2M267.8,369.2L266.6,380.2M280.8,385.3L287.6,387.1M281.7,295.4L279.9,302.8M312.5,393.3L315.9,391.4M324.4,303.1L322.9,309.0M265.8,286.2L273.5,285.9M317.8,355.9L321.5,358.9M315.9,391.4L322.4,390.2M330.3,313.2L332.6,310.1M351.7,398.5L356.6,396.4M378.7,302.3L376.6,300.4M359.3,305.3L364.7,311.3M306.2,289.5L314.9,290.0M356.6,396.4L365.1,396.3M404.8,311.9L401.2,316.1M314.9,290.0L319.5,291.1M344.7,298.0L350.5,295.7M399.6,365.8L401.8,369.2M309.1,370.4L308.1,376.7M342.2,314.1L343.6,317.3M368.4,305.4L364.7,311.3M407.0,312.3L406.2,317.5M295.4,323.6L291.9,327.2M350.5,295.7L357.4,295.4M312.8,317.8L310.7,315.2M386.3,300.8L392.9,301.9M289.7,374.6L292.3,383.3M304.3,321.6L300.4,330.0M333.4,328.5L337.0,332.0M392.9,301.9L398.1,303.6M280.8,311.3L285.5,311.2M312.3,322.0L316.1,316.8M387.9,381.3L386.5,385.7M373.7,377.2L377.5,381.8M339.1,327.0L340.9,333.6M285.5,311.2L289.0,312.4M401.5,328.0L394.1,331.8M296.2,322.0L294.5,321.3M367.9,386.5L374.1,394.0M393.2,380.9L391.1,386.3M281.0,393.2L278.8,396.5M269.1,386.0L270.4,393.0M266.6,380.2L269.8,380.4M383.0,334.3L379.1,337.2M320.8,317.9L326.7,318.7M286.7,392.2L286.5,396.1M276.5,345.6L270.3,349.0M362.7,323.6L370.2,323.2M345.0,307.2L346.3,306.7M315.2,297.4L312.9,302.6M311.5,351.6L315.1,355.2M401.5,328.0L404.7,327.1M313.6,313.0L310.7,315.2M320.9,297.9L321.0,303.4M349.1,393.7L357.3,390.8M315.6,349.8L317.8,355.9M353.0,356.1L351.2,358.9M295.4,337.3L300.0,340.0M410.8,291.2L403.9,298.2M383.0,298.2L382.9,296.0M303.4,302.7L305.6,306.5M310.3,315.2L308.5,315.1M391.5,399.0L397.6,396.0M396.3,306.1L392.2,313.7M356.6,353.2L353.7,360.0M308.9,312.6L313.6,313.0M300.0,340.0L303.2,340.7M334.3,345.9L342.9,344.8M342.2,372.8L342.3,376.5M398.8,305.4L396.8,314.1M393.4,361.2L399.6,365.8M281.3,372.1L283.8,375.0M342.9,344.8L346.6,343.4M373.4,350.4L377.0,348.2M379.5,314.1L385.7,317.9M295.9,321.5L297.7,321.3M287.6,370.0L289.7,374.6M324.4,374.2L323.4,381.8M377.0,348.2L383.0,350.5M267.0,361.0L273.4,359.8M273.4,323.0L278.7,328.1M332.6,310.1L327.4,311.1M330.0,376.9L325.9,382.7M273.4,359.8L278.6,360.9M291.1,322.4L294.5,321.3M371.6,328.3L370.3,334.0M367.5,380.6L367.9,386.5M314.3,364.5L317.0,365.4M322.4,390.2L321.1,398.0M353.4,334.2L354.7,337.1M378.1,328.1L375.3,333.3M409.5,388.2L406.9,390.5M396.8,324.8L402.0,325.1M351.3,369.6L356.1,370.0M345.4,302.5L342.2,306.0M270.5,340.6L269.8,344.2M344.7,349.5L348.5,353.2M402.4,287.4L402.6,291.1M332.3,313.4L332.6,310.1M314.0,344.0L306.6,349.1M292.7,298.4L297.8,303.5M345.0,307.2L347.8,307.9M326.5,354.0L326.3,359.9M350.8,348.8L348.5,353.2M328.3,312.5L332.6,310.1M333.3,339.4L338.2,338.1M301.3,297.0L303.4,302.7M336.5,301.4L333.0,306.3M277.2,286.3L281.4,286.0M328.3,355.0L332.3,362.1M289.0,312.4L284.1,316.5M377.0,345.8L378.8,342.5M342.0,302.3L337.5,306.9M359.3,305.3L358.7,303.9M373.3,307.5L375.8,313.4M281.4,286.0L289.0,287.2M295.4,323.6L296.2,322.0M319.5,291.1L323.4,292.2M381.5,305.7L385.7,300.9M402.6,291.1L400.0,297.2M323.5,371.4L324.4,374.2M270.1,354.1L273.6,354.5M377.2,308.4L379.5,314.1M383.0,298.2L376.2,298.5M266.2,318.9L270.8,324.8M323.4,292.2L328.8,291.9M357.4,295.4L359.1,295.7M364.0,377.3L363.3,383.2M306.5,359.9L310.5,358.8M316.2,315.5L316.3,313.8M271.5,315.9L273.4,323.0M389.0,305.3L385.7,300.9M359.1,295.7L366.6,294.8M309.2,321.2L307.3,326.9M345.0,307.2L343.6,308.1M398.1,303.6L402.1,299.9M304.3,375.8L305.4,381.6M371.0,376.5L367.5,380.6M343.6,308.1L341.7,308.5M400.7,380.1L405.0,388.6M310.5,358.8L317.5,362.2M348.8,365.6L353.4,367.5M312.3,322.0L310.8,329.4M343.0,327.2L345.0,333.1M402.1,299.9L407.9,302.6M378.8,387.5L387.2,390.4M406.1,380.5L409.5,388.2M296.0,390.0L297.5,398.5M353.4,367.5L357.4,365.6M351.5,330.4L353.4,334.2M297.7,311.2L301.4,311.9M303.2,340.7L302.1,345.0M393.5,297.8L395.0,295.2M298.5,391.2L301.8,397.9M391.2,371.1L395.8,370.1M331.6,333.3L338.2,338.1M333.8,317.9L340.3,318.0M386.5,385.7L387.2,390.4M384.9,379.5L387.9,381.3M282.0,383.1L287.8,381.3M328.0,295.8L332.0,302.2M354.4,304.1L352.5,303.2M286.1,344.1L280.9,348.1M378.7,302.3L385.7,300.9M383.0,350.5L381.5,353.9M266.3,298.1L272.3,302.4M325.1,388.3L330.5,386.8M359.3,305.3L367.4,304.0M365.0,356.5L364.8,358.6M388.6,348.1L385.2,356.0M384.0,298.8L385.7,300.9M402.1,299.9L400.0,297.2M331.8,297.5L332.0,302.2M362.7,391.4L366.7,390.7M317.1,286.5L320.5,284.1M320.8,317.9L324.9,316.4M284.4,361.4L280.2,367.3M312.9,302.6L317.9,308.6M301.4,311.9L308.5,315.1M403.4,397.9L408.2,397.9M277.4,370.9L273.0,375.7M269.4,313.1L266.2,318.9M367.8,355.4L364.8,358.6M357.1,290.9L365.6,291.9M309.3,338.9L314.9,339.0M410.5,321.6L406.8,332.5M306.7,318.6L309.2,321.2M395.6,296.9L398.8,294.7M338.1,377.3L337.7,381.7M360.7,371.0L356.7,375.6M392.2,313.7L395.1,317.8M347.3,322.8L343.0,327.2M360.4,312.4L354.4,309.5M287.1,306.9L295.3,308.9M342.3,376.5L345.9,380.1M287.0,324.7L288.0,329.1M308.7,317.0L310.7,315.2M281.5,376.5L287.8,381.3M384.0,326.5L387.3,334.7M295.3,308.9L301.3,306.7M377.5,381.8L386.5,385.7M291.1,322.4L291.9,327.2M390.1,329.8L394.1,331.8M277.4,339.0L280.5,342.8M355.3,303.8L358.7,303.9M366.6,294.8L366.1,301.3M332.4,392.0L328.6,399.2M289.0,287.2L286.8,290.4M284.9,339.3L286.1,344.1M320.4,344.4L315.6,349.8M372.6,317.8L378.5,315.9M370.3,334.0L371.9,340.6M327.0,346.1L323.1,351.3M340.7,311.6L341.5,311.4M264.9,329.3L270.5,326.8M270.6,291.2L266.3,298.1M359.9,350.2L365.0,356.5M309.1,334.8L315.0,333.3M276.5,290.9L270.2,295.2M306.7,318.6L302.8,316.8M343.7,355.5L351.2,358.9M405.3,355.6L399.6,360.4M349.2,308.6L354.4,309.5M345.1,339.2L349.0,339.9M366.6,294.8L362.5,301.4M308.8,298.5L312.9,302.6M298.1,365.0L292.1,370.0M385.4,344.0L392.5,342.7M342.2,314.1L336.1,312.4M292.2,285.2L297.8,287.2M334.1,369.7L338.1,377.3M281.9,356.5L284.5,354.3M373.4,302.9L376.5,302.8M389.0,305.3L392.2,313.7M320.0,322.4L320.6,326.7M343.6,317.3L340.5,321.9M373.7,377.2L373.2,382.4M324.2,323.6L325.9,326.5M334.4,312.3L335.2,309.1M280.2,367.3L285.5,364.4M382.6,376.3L377.5,381.8M269.1,386.0L265.7,393.2M321.5,358.9L326.3,359.9M368.4,305.4L373.3,307.5M390.2,291.6L386.6,299.6M316.2,372.7L323.5,371.4M275.0,384.9L270.4,393.0M362.5,366.6L367.4,366.8M374.1,394.0L368.6,397.5M301.4,311.9L302.8,316.8M356.7,375.6L364.0,377.3M357.7,307.0L355.3,303.8M314.9,339.0L314.0,344.0M312.5,393.3L312.4,396.5M401.8,369.2L404.4,369.2M265.8,286.2L270.6,291.2M296.9,342.8L299.3,348.6M393.2,380.9L400.7,380.1M292.3,383.3L298.0,383.0M315.6,349.8L315.1,355.2M306.2,289.5L304.9,295.0M302.1,345.0L306.6,349.1M286.7,392.2L296.0,390.0M390.4,285.6L396.5,291.7M335.7,388.3L340.8,384.9M344.7,298.0L345.4,302.5M373.6,355.9L376.8,361.1M314.1,313.5L313.6,313.0M393.4,361.2L391.9,365.4M327.7,284.2L331.8,285.0M381.5,353.9L384.0,359.1M267.7,367.0L273.0,369.6M287.6,370.0L283.8,375.0M280.8,311.3L278.6,316.1M367.8,293.3L373.9,290.3M276.2,364.9L277.4,370.9M338.7,308.1L338.0,307.5M330.0,376.9L323.4,381.8M371.9,371.5L371.0,376.5M355.0,303.4L355.3,303.8M266.6,380.2L269.1,386.0M369.3,303.3L373.4,302.9M312.8,317.8L308.6,318.8M320.8,317.9L324.2,323.6M367.5,380.6L364.4,385.0M358.5,321.7L357.5,326.8M352.1,376.7L353.5,380.1M362.7,323.6L359.3,330.2M305.6,306.5L309.2,307.2M325.5,393.6L321.1,398.0M401.5,328.0L402.1,333.3M346.7,312.8L354.5,313.7M394.5,338.9L397.8,342.6M340.5,321.9L347.3,322.8M295.4,337.3L296.9,342.8M385.7,317.9L388.8,319.0M278.1,291.8L281.7,295.4M289.8,350.1L290.6,354.4M378.1,328.1L384.0,326.5M276.5,345.6L280.9,348.1M334.3,345.9L331.4,351.1M278.7,328.1L284.1,326.9M301.3,297.0L297.8,303.5M325.5,393.6L332.4,392.0M286.8,290.4L289.5,298.4M349.2,308.6L347.8,307.9M375.2,386.3L378.8,387.5M373.4,350.4L373.6,355.9M320.9,335.2L325.7,334.8M368.6,397.5L373.8,398.9M383.0,298.2L378.7,302.3M309.7,397.7L321.1,398.0M267.0,361.0L267.7,367.0M307.0,367.5L309.1,370.4M377.2,308.4L375.8,313.4M306.1,284.2L317.1,286.5M276.9,308.8L275.8,314.3M314.1,313.5L316.2,315.5M356.8,347.9L359.9,350.2M369.3,303.3L371.8,298.6M312.3,322.0L307.3,326.9M397.1,354.3L405.3,355.6M354.3,319.2L352.3,322.8M406.1,380.5L405.0,388.6M396.8,324.8L393.4,328.2M390.4,377.0L393.2,380.9M305.4,381.6L303.5,387.7M351.5,330.4L345.0,333.1M334.3,323.1L339.1,327.0M345.9,380.1L348.2,388.3M289.2,367.3L298.1,365.0M298.5,391.2L297.5,398.5M287.6,387.1L286.7,392.2M325.5,370.3L334.1,369.7M377.2,284.9L382.0,290.6M326.6,310.8L327.4,311.1M277.2,286.3L278.1,291.8M332.3,313.4L330.3,313.2M377.0,345.8L373.4,350.4M316.4,329.1L320.6,326.7M319.5,291.1L315.2,297.4M327.3,349.1L326.5,354.0M314.0,344.0L315.6,349.8M270.1,354.1L267.0,361.0M357.4,295.4L359.4,301.5M326.7,318.7L324.9,316.4M407.4,360.1L410.1,365.2M350.8,348.8L356.6,353.2M353.6,344.6L358.8,344.8M304.4,390.3L312.5,393.3M306.5,359.9L307.0,367.5M398.1,303.6L396.3,306.1M299.5,371.7L304.3,375.8M289.0,312.4L292.4,316.4M392.1,356.0L393.4,361.2M388.6,348.1L395.7,349.9M348.8,365.6L342.2,372.8M300.7,290.3L306.2,289.5M387.4,363.9L391.2,371.1M284.4,361.4L289.9,361.8M323.1,313.3L322.9,311.6M336.9,295.5L344.7,298.0M281.5,376.5L282.0,383.1M289.9,361.8L296.0,360.8M390.1,329.8L387.3,334.7M376.7,323.5L378.1,328.1M384.9,379.5L386.5,385.7M331.3,365.9L334.5,364.1M325.9,326.5L331.6,333.3M275.8,314.3L280.8,311.3M326.6,310.8L323.1,313.3M284.9,339.3L280.5,342.8M323.1,351.3L321.5,358.9M277.5,393.6L278.8,396.5M268.9,331.8L270.5,340.6M371.0,296.1L366.1,301.3M365.9,370.1L371.9,371.5M266.3,298.1L264.7,305.9M370.3,334.0L365.3,340.0M383.0,298.2L376.6,300.4M406.1,340.7L409.0,344.8M352.3,322.8L358.5,321.7M317.1,286.5L319.5,291.1M359.9,350.2L356.6,353.2M346.6,343.4L350.8,348.8M303.5,387.7L307.9,388.7M289.4,290.6L292.7,298.4M357.1,290.9L357.4,295.4M365.0,348.8L365.0,356.5M307.9,388.7L315.1,388.1M308.8,298.5L309.3,303.6M340.7,393.9L344.3,390.8M298.8,292.3L301.3,297.0M393.4,328.2L401.5,328.0M395.6,296.9L398.1,303.6M318.4,316.1L316.1,316.8M344.3,390.8L349.1,393.7M382.9,395.4L386.2,398.3M334.3,291.0L340.3,290.4M290.6,339.6L295.4,337.3M287.1,306.9L289.0,312.4M386.2,398.3L391.5,399.0M389.0,305.3L388.5,314.4M284.1,316.5L287.0,324.7M371.0,296.1L378.3,295.1M339.1,370.6L338.1,377.3M324.2,366.7L325.5,370.3M370.6,313.8L372.6,317.8M306.5,317.4L302.8,316.8M264.7,305.9L273.4,307.8M318.7,375.4L323.4,381.8M273.4,307.8L276.9,308.8M404.1,377.4L406.1,380.5M323.1,313.3L324.9,316.4M366.6,329.5L370.3,334.0M312.5,393.3L309.7,397.7M297.3,387.5L298.5,391.2M406.8,332.5L406.1,340.7M351.5,319.4L354.3,319.2M315.9,391.4L312.4,396.5M302.1,345.0L299.3,348.6M393.8,322.4L396.8,324.8M335.8,308.4L336.1,312.4M390.4,285.6L390.2,291.6M344.7,298.0L342.0,302.3M328.8,291.9L331.8,297.5M336.9,347.9L343.7,355.5M286.2,333.3L291.6,333.7M385.4,344.0L383.0,350.5M281.7,295.4L284.8,303.9M350.5,295.7L345.4,302.5M381.5,353.9L376.8,361.1M291.6,333.7L298.9,334.9M322.5,337.2L329.6,338.7M281.9,356.5L278.6,360.9M378.7,302.3L384.0,298.8M276.2,364.9L273.0,369.6M329.6,338.7L333.3,339.4M365.1,343.1L368.5,346.2M356.6,396.4L368.6,397.5M273.5,285.9L277.2,286.3M280.2,367.3L277.4,370.9M335.8,308.4L335.2,309.1M368.5,346.2L377.0,345.8M309.1,370.4L314.8,377.4M402.2,351.4L407.8,349.4M368.4,305.4L370.6,313.8M320.8,317.9L320.0,322.4M359.3,330.2L360.1,337.2M316.2,372.7L318.7,375.4M352.1,376.7L350.2,379.7M296.0,360.8L299.7,361.0M304.3,321.6L307.3,326.9M326.7,318.7L324.2,323.6M362.7,323.6L357.5,326.8M356.7,375.6L353.5,380.1M299.7,361.0L306.5,359.9M334.5,364.1L340.8,364.5M401.5,328.0L398.1,334.7M387.5,324.3L390.1,329.8M393.2,380.9L396.4,385.0M340.8,364.5L348.8,365.6M349.1,393.7L347.6,396.4M342.2,306.0L341.7,308.5M383.0,334.3L385.8,340.8M404.7,327.1L402.1,333.3M280.9,335.1L284.9,339.3M286.7,392.2L289.8,396.2M376.9,369.6L384.6,370.1M276.5,345.6L278.3,351.0M300.0,340.0L296.9,342.8M334.3,345.9L327.3,349.1M318.7,313.7L319.5,312.5M269.8,380.4L277.5,382.2M286.8,290.4L281.7,295.4M373.4,302.9L375.4,299.0M373.4,350.4L367.8,355.4M277.5,382.2L282.0,383.1M315.1,388.1L318.8,386.4M320.9,297.9L324.4,303.1M318.4,316.1L318.2,316.0M367.8,293.3L366.6,294.8M318.8,386.4L325.1,388.3M345.4,302.5L352.5,303.2M365.0,302.2L359.3,305.3M391.5,399.0L403.4,397.9M306.1,284.2L312.9,287.9M356.6,353.2L361.6,361.8" stroke="#949494" stroke-width="0.38" fill="none"/>
</g>
<path d="M272.8,353.5 L273.2,340 L276,331 L280,324.4 L292,319 L303.5,314.6 L318,310 L334.2,305.6 L350,301.5 L367.5,296.6 L384,293 L395.7,291.2 L400.3,296.6 L401.2,304 L399.5,312 L395.7,326 L390.6,346.6 L386.7,354.2 L385.4,338.9 L380.3,331.2 L367.5,333.8 L354.7,345.3 L347,359.4 L342,372 L336.8,385 L326,393 L310,394.5 L301,389 L296.5,383 L295.3,375 L294,366 L292.6,361.3 L285,358 Z" fill="none" stroke="#d8d8d8" stroke-width="0.5"/>
</svg>
<div class="a" style="left:0.2px;top:0px;width:6.5px;height:7px;background:#e8c8d0"></div><div class="a" style="left:1.8px;top:1.5px;width:3px;height:4px;background:#4050a0;border-radius:1px"></div>
<div class="a" style="left:7px;top:1px;width:8px;height:5px;background:#c01010"></div>
</div>
<div class="a" style="left:572px;top:31.5px;width:53px;height:11.5px;border-top:1px solid #e4e4e4;border-left:1px solid #e4e4e4;border-bottom:1px solid #a0a0a0"></div>
<div class="a" style="left:575.5px;top:32.5px;width:11.5px;height:8.5px;background:#d0d0d0;border-top:1px solid #707070;border-left:1px solid #707070;border-right:1px solid #f0f0f0;border-bottom:1px solid #f0f0f0"></div>
<div class="a" style="left:584px;top:35px;width:1px;height:4px;background:#404040"></div>
<div class="a" style="left:588px;top:32.5px;width:1px;height:9px;background:#303030"></div>
<div class="a" style="left:590px;top:35px;width:3px;height:1px;background:#303030"></div><div class="a" style="left:590px;top:38.5px;width:3px;height:1px;background:#303030"></div>
<div class="a" style="left:594.5px;top:32px;width:30px;height:10px;border-left:1px solid #909090;border-top:1px solid #e0e0e0;border-bottom:1px solid #e8e8e8"></div>
<div class="t" style="left:597px;top:34.2px;font-size:5.8px;color:#101010">(N/A)</div>
<div class="a" style="left:573px;top:46.5px;width:7.5px;height:7.5px;border-top:1px solid #eee;border-left:1px solid #eee;border-right:1px solid #606060;border-bottom:1px solid #606060"></div>
<div class="t" style="left:574.5px;top:47px;font-size:5.5px;color:#202020">c</div>
<div class="a" style="left:582.5px;top:46.5px;width:40px;height:7.5px;border-top:1px solid #eee;border-left:1px solid #eee;border-right:1px solid #808080;border-bottom:1px solid #808080"></div>
<svg class="a" style="left:596px;top:47px" width="12" height="6"><path d="M1,4 Q3,1 6,3 Q9,5 11,2 M3,5 L9,5" stroke="#303030" stroke-width="0.9" fill="none"/></svg>
<div class="t" style="left:573.4px;top:56.5px;font-size:6.4px;color:#000;font-family:'Liberation Serif',serif;letter-spacing:-0.12px">Create...</div>
<div class="a" style="left:572.5px;top:63.8px;width:51.5px;height:7.5px;background:#cacaca;border-top:1px solid #e8e8e8;border-left:1px solid #e8e8e8;border-right:1px solid #909090;border-bottom:1px solid #909090"></div>
<div class="t" style="left:573.4px;top:64.4px;font-size:6.4px;color:#000;font-family:'Liberation Serif',serif;letter-spacing:-0.12px">Modify...</div>
<div class="t" style="left:578.4px;top:72.2px;font-size:6.4px;color:#000;font-family:'Liberation Serif',serif;letter-spacing:-0.12px">Extended...</div>
<div class="t" style="left:578.4px;top:80.0px;font-size:6.4px;color:#000;font-family:'Liberation Serif',serif;letter-spacing:-0.12px">Align...</div>
<div class="a" style="left:577.5px;top:87.2px;width:46.5px;height:7.5px;background:#cacaca;border-top:1px solid #e8e8e8;border-left:1px solid #e8e8e8;border-right:1px solid #909090;border-bottom:1px solid #909090"></div>
<div class="t" style="left:578.4px;top:87.8px;font-size:6.4px;color:#000;font-family:'Liberation Serif',serif;letter-spacing:-0.12px">Move...</div>
<div class="t" style="left:578.4px;top:95.6px;font-size:6.4px;color:#000;font-family:'Liberation Serif',serif;letter-spacing:-0.12px">Rotate</div>
<div class="t" style="left:578.4px;top:103.4px;font-size:6.4px;color:#000;font-family:'Liberation Serif',serif;letter-spacing:-0.12px">Scale</div>
<div class="t" style="left:578.4px;top:111.2px;font-size:6.4px;color:#000;font-family:'Liberation Serif',serif;letter-spacing:-0.12px">Mirror</div>
<div class="t" style="left:578.4px;top:119.0px;font-size:6.4px;color:#000;font-family:'Liberation Serif',serif;letter-spacing:-0.12px">Break</div>
<div class="t" style="left:578.4px;top:126.8px;font-size:6.4px;color:#000;font-family:'Liberation Serif',serif;letter-spacing:-0.12px">Reorient</div>
<div class="t" style="left:578.4px;top:134.6px;font-size:6.4px;color:#000;font-family:'Liberation Serif',serif;letter-spacing:-0.12px">Delete</div>
<div class="a" style="left:577px;top:142.0px;width:47px;height:7px;background:#8a0000"></div>
<div class="t" style="left:578.4px;top:142.4px;font-size:6.4px;color:#fff;font-family:'Liberation Serif',serif;letter-spacing:-0.12px">Spline...</div>
<div class="t" style="left:573.4px;top:150.2px;font-size:6.4px;color:#000;font-family:'Liberation Serif',serif;letter-spacing:-0.12px">Surface...</div>
<div class="t" style="left:573.4px;top:158.0px;font-size:6.4px;color:#000;font-family:'Liberation Serif',serif;letter-spacing:-0.12px">Select...</div>
<div class="t" style="left:573.4px;top:165.8px;font-size:6.4px;color:#000;font-family:'Liberation Serif',serif;letter-spacing:-0.12px">Display...</div>
<div class="a" style="left:576.5px;top:234.5px;width:42px;height:7.5px;border-top:1px solid #eee;border-left:1px solid #eee;border-right:1px solid #909090;border-bottom:1px solid #909090"></div>
<svg class="a" style="left:592px;top:236px" width="12" height="5"><path d="M1,1 L6,4 L11,1 M3,1 L6,3 L9,1" stroke="#404040" stroke-width="0.8" fill="none"/></svg>
<div class="btn" style="left:573px;top:243px;width:16px;height:9px"></div>
<div class="t" style="left:575px;top:245px;font-size:5.5px">EXT</div>
<div class="btn" style="left:590px;top:243px;width:16px;height:9px"></div>
<div class="t" style="left:592px;top:245px;font-size:5.5px">SEL</div>
<div class="btn" style="left:607px;top:243px;width:18px;height:9px"></div>
<div class="t" style="left:609px;top:245px;font-size:5.5px">MUL</div>
<div class="a" style="left:520px;top:251px;width:52px;height:82px;background:#fff;border:1px solid #404040"></div>
<div class="a" style="left:521px;top:252px;width:50px;height:7px;background:#8a0000"></div>
<div class="t" style="left:522px;top:253px;font-size:5.5px;color:#fff">Surface</div>
<div class="btn" style="left:520px;top:335px;width:26px;height:8px;border-color:#404040"></div>
<div class="t" style="left:522px;top:336.5px;font-size:5.5px">Hide All</div>
<div class="btn" style="left:546px;top:335px;width:26px;height:8px;border-color:#404040"></div>
<div class="t" style="left:548px;top:336.5px;font-size:5.5px">Show All</div>
<div class="btn" style="left:520px;top:343px;width:26px;height:8px;border-color:#404040"></div>
<div class="t" style="left:522px;top:344.5px;font-size:5.5px">Select All</div>
<div class="btn" style="left:546px;top:343px;width:26px;height:8px;border-color:#404040"></div>
<div class="t" style="left:548px;top:344.5px;font-size:5.5px">Deselect</div>
<div class="t" style="left:0.5px;top:477.8px;font-size:6.4px;font-family:'Liberation Serif',serif">Click to display pop-up menu.</div>
<div class="a" style="left:490px;top:477px;width:34px;height:8px;border-top:1px solid #909090;border-left:1px solid #909090;border-right:1px solid #e8e8e8;border-bottom:1px solid #e8e8e8"></div>
<div class="t" style="left:492px;top:478.3px;font-size:6px;color:#101010;font-family:'Liberation Serif',serif">X: 0.9577</div>
<div class="a" style="left:525px;top:477px;width:33px;height:8px;border-top:1px solid #909090;border-left:1px solid #909090;border-right:1px solid #e8e8e8;border-bottom:1px solid #e8e8e8"></div>
<div class="t" style="left:527px;top:478.3px;font-size:6px;color:#101010;font-family:'Liberation Serif',serif">Y: -0.6954</div>
<div class="a" style="left:559px;top:477px;width:32px;height:8px;border-top:1px solid #909090;border-left:1px solid #909090;border-right:1px solid #e8e8e8;border-bottom:1px solid #e8e8e8"></div>
<div class="t" style="left:561px;top:478.3px;font-size:6px;color:#101010;font-family:'Liberation Serif',serif">Z: 4.1491</div>
<div class="a" style="left:592px;top:477px;width:31px;height:8px;border-top:1px solid #909090;border-left:1px solid #909090;border-right:1px solid #e8e8e8;border-bottom:1px solid #e8e8e8"></div>
<div class="t" style="left:594px;top:478.3px;font-size:6px;color:#101010;font-family:'Liberation Serif',serif">units</div>
<div class="a" style="left:0;top:486px;width:625px;height:14px;background:#c0c0c0;border-top:1px solid #fff"></div>
<div class="btn" style="left:1px;top:488px;width:26px;height:11px"></div>
<div class="t" style="left:10.8px;top:489.6px;font-size:7px;font-weight:bold;font-family:'Liberation Serif',serif">Start</div>
<svg class="a" style="left:2.5px;top:489.5px" width="8" height="8"><path d="M1,1 L4,1.5 L4,4 L1,3.5Z" fill="#d04020"/><path d="M4.5,1.5 L7.5,1 L7.5,3.5 L4.5,4Z" fill="#40a030"/><path d="M1,4 L4,4.5 L4,7 L1,6.5Z" fill="#3050c0"/><path d="M4.5,4.5 L7.5,4 L7.5,6.5 L4.5,7Z" fill="#e0c020"/></svg>
<div class="a" style="left:29px;top:488px;width:78px;height:11px;background:#e4e4e4;border-top:1px solid #000;border-left:1px solid #000;border-right:1px solid #fff;border-bottom:1px solid #fff"></div>
<div class="t" style="left:41.5px;top:489.5px;font-size:7.2px;font-weight:bold;font-family:'Liberation Serif',serif">volvo pv2 - Zanoz...</div>
<div class="t" style="left:32.5px;top:490.5px;font-size:5.5px;font-weight:bold;font-style:italic;color:#1818c0;letter-spacing:-0.6px">SO</div>
<div class="btn" style="left:109px;top:488px;width:78px;height:11px"></div>
<div class="t" style="left:120px;top:489.5px;font-size:7px;font-family:'Liberation Serif',serif">9. nelly feat. kelly ro...</div>
<svg class="a" style="left:112px;top:490px" width="7" height="7"><path d="M3.5,0.5 L6.5,3.5 L3.5,6.5 L0.5,3.5Z" fill="#e0a040" stroke="#806020" stroke-width="0.5"/></svg>
<div class="btn" style="left:189px;top:488px;width:78px;height:11px"></div>
<div class="t" style="left:200px;top:489.5px;font-size:7px;font-family:'Liberation Serif',serif">pv bygget - Paint</div>
<svg class="a" style="left:192px;top:490px" width="7" height="7"><path d="M1,1 L3,6 L5,6 L6,1" fill="#d8c040" stroke="#706020" stroke-width="0.6"/></svg>
<div class="btn" style="left:268px;top:488px;width:79px;height:11px"></div>
<div class="t" style="left:279px;top:489.5px;font-size:7px;font-family:'Liberation Serif',serif">MSN Messenger</div>
<svg class="a" style="left:271px;top:490px" width="7" height="7"><circle cx="2.5" cy="2.5" r="1.6" fill="#30a040"/><circle cx="4.8" cy="3.5" r="1.5" fill="#3060c0"/><path d="M1,6.5 L6,6.5" stroke="#208030" stroke-width="1"/></svg>
<div class="btn" style="left:348px;top:488px;width:79px;height:11px"></div>
<div class="t" style="left:359px;top:489.5px;font-size:7px;font-family:'Liberation Serif',serif">s: så: säg: säge - ko...</div>
<svg class="a" style="left:351px;top:490px" width="7" height="7"><path d="M1,1 L4,4 M3,6 L6,2" stroke="#208050" stroke-width="1.2"/><circle cx="4.5" cy="5" r="1.2" fill="#60a0d0"/></svg>
<div class="sunk" style="left:539px;top:488px;width:85px;height:11px"></div>
<svg class="a" style="left:540px;top:488px" width="70" height="11"><path d="M5,3.5 L3,5.5 L5,7.5 M7,3.5 L5,5.5 L7,7.5" stroke="#202020" stroke-width="0.7" fill="none"/><circle cx="12" cy="3" r="1.3" fill="#309090"/><path d="M10,9 L12,4.5 L14,9" stroke="#40a0a0" stroke-width="1.2" fill="none"/><path d="M10,9.5 L15,9.5" stroke="#2060a0" stroke-width="1"/><rect x="18.5" y="2.5" width="5.5" height="5" fill="#3040a0"/><rect x="19.5" y="3.5" width="3" height="2.5" fill="#a0a0f0"/><path d="M18,9 L24,9" stroke="#404080" stroke-width="1"/><rect x="26.5" y="2" width="5" height="4.5" fill="#3050b0"/><path d="M29,9.5 L31.5,5 L34,9.5 Z" fill="#e8d020" stroke="#806000" stroke-width="0.4"/><rect x="36" y="2" width="7" height="7.5" fill="#103020"/><path d="M37,4 L42,4 M37,6 L42,6 M37,8 L42,8 M38.5,2 L38.5,9.5 M40.5,2 L40.5,9.5" stroke="#60a060" stroke-width="0.5"/><path d="M45,5 L47,5 L49.5,2.5 L49.5,9 L47,6.5 L45,6.5 Z" fill="#404040"/><path d="M50.5,3.5 Q51.5,5.5 50.5,8" stroke="#606060" stroke-width="0.6" fill="none"/><circle cx="56.5" cy="6" r="3.3" fill="#40b040"/><circle cx="55.5" cy="5" r="1.2" fill="#a0e0a0"/></svg>
<div class="t" style="left:605.3px;top:489.8px;font-size:6.8px;font-family:'Liberation Serif',serif">19:34</div>
</body></html>
